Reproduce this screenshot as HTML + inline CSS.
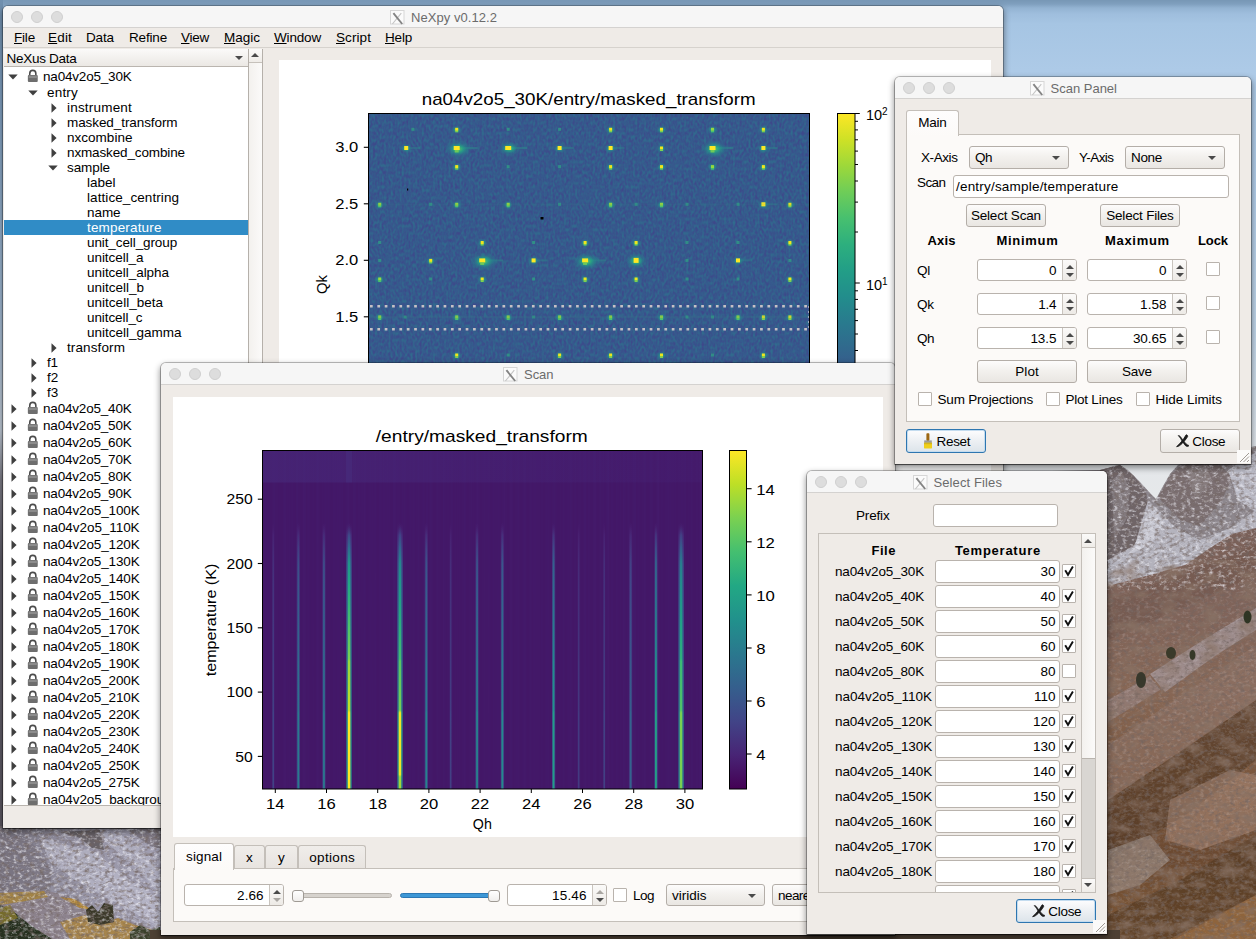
<!DOCTYPE html>
<html><head><meta charset="utf-8"><title>NeXpy</title>
<style>
html,body{margin:0;padding:0;}
body{width:1256px;height:939px;overflow:hidden;position:relative;font-family:"Liberation Sans",sans-serif;background:#6b5a52;}
.t{position:absolute;white-space:nowrap;color:#000;}
.win{position:absolute;background:#efebe7;border-radius:5px 5px 0 0;box-shadow:0 0 0 1px rgba(0,0,0,.24),0 1px 1px 0 rgba(0,0,0,.5),0 3px 6px 1px rgba(0,0,0,.42);overflow:hidden;}
.tb{position:absolute;left:0;top:0;right:0;height:21px;background:#f6f6f6;border-bottom:1px solid #d4d2d0;}
.tl{position:absolute;width:10px;height:10px;border-radius:50%;background:#dddddd;border:1px solid #cfcfcf;box-sizing:content-box;}
.xi{position:absolute;width:13px;height:13px;border:1px solid #c9c9c9;background:#f9f9f9;font-family:"Liberation Serif",serif;font-size:17px;line-height:14px;text-align:center;color:#8e8e8e;overflow:hidden;}
.btn{position:absolute;box-sizing:border-box;border:1px solid #b4aea8;border-radius:3px;background:linear-gradient(#fdfcfc,#f3f1ee 45%,#e9e6e2);}
.fld{position:absolute;box-sizing:border-box;border:1px solid #b9b3ad;border-radius:3px;background:#fff;}
.cb{position:absolute;box-sizing:border-box;width:14px;height:14px;border:1px solid #b9b3ad;background:#fff;border-radius:1px;}
.spb{position:absolute;right:0;top:0;bottom:0;width:13px;border-left:1px solid #c9c4be;background:linear-gradient(#fbfaf9,#edeae6);border-radius:0 2px 2px 0;}
.au{position:absolute;width:0;height:0;border-left:3.5px solid transparent;border-right:3.5px solid transparent;border-bottom:4px solid #4a4a4a;}
.ad{position:absolute;width:0;height:0;border-left:3.5px solid transparent;border-right:3.5px solid transparent;border-top:4px solid #4a4a4a;}
.ar{position:absolute;width:0;height:0;border-top:4px solid transparent;border-bottom:4px solid transparent;border-left:5px solid #3c3c3c;}
</style></head><body>

<div id="desk" style="position:absolute;left:0;top:0;width:1256px;height:939px;overflow:hidden;">
<div style="position:absolute;left:0;top:0;width:1256px;height:500px;background:linear-gradient(#7797b5 0px,#7f9fbe 4px,#93b3d2 8px,#9fbedd 14px,#a6c5e3 24px,#adcae7 70px,#b3cee9 200px,#c0d5e9 330px,#d4dfe9 410px,#e4e7ea 460px,#e6e8ea 500px);"></div>
<div style="position:absolute;left:0;top:0;width:3px;height:830px;background:linear-gradient(#6f8fae 0px,#7f9fc0 80px,#9fb8d2 300px,#c0cad6 430px,#7d7c86 480px,#5f5c68 560px,#625e69 700px,#5c5862 830px);"></div>
<svg style="position:absolute;left:0;top:0" width="1256" height="939" viewBox="0 0 1256 939">
<defs>
<filter id="nw" x="0" y="0" width="100%" height="100%"><feTurbulence type="fractalNoise" baseFrequency="0.22 0.32" numOctaves="3" seed="4"/><feColorMatrix values="0 0 0 0 0.88  0 0 0 0 0.88  0 0 0 0 0.94  2.6 0 0 0 -1.25"/></filter>
<filter id="nd" x="0" y="0" width="100%" height="100%"><feTurbulence type="fractalNoise" baseFrequency="0.2 0.3" numOctaves="3" seed="11"/><feColorMatrix values="0 0 0 0 0.17  0 0 0 0 0.13  0 0 0 0 0.12  0 2.8 0 0 -1.3"/></filter>
<filter id="nb" x="0" y="0" width="100%" height="100%"><feTurbulence type="fractalNoise" baseFrequency="0.05 0.09" numOctaves="2" seed="23"/><feColorMatrix values="0 0 0 0 0.25  0 0 0 0 0.17  0 0 0 0 0.13  0 0 2.4 0 -1.05"/></filter>
<linearGradient id="mr" x1="0" y1="0" x2="0" y2="1"><stop offset="0" stop-color="#7a6058"/><stop offset="0.2" stop-color="#80645a"/><stop offset="0.4" stop-color="#876755"/><stop offset="0.6" stop-color="#7b573d"/><stop offset="0.8" stop-color="#6b4930"/><stop offset="1" stop-color="#805a38"/></linearGradient>
<linearGradient id="ml" x1="0" y1="0" x2="1" y2="0.25"><stop offset="0" stop-color="#6d6873"/><stop offset="0.35" stop-color="#8f8c9c"/><stop offset="1" stop-color="#a3a1b4"/></linearGradient>
<clipPath id="cr"><rect x="1003" y="440" width="253" height="499"/></clipPath>
<clipPath id="cm"><path d="M1003 472 L1100 470 L1108 468 L1114 466 L1120 465 L1128 470 L1140 482 L1150 493 L1156 499 L1162 488 L1170 474 L1178 465 L1200 458 L1256 446 L1256 939 L1003 939 Z"/></clipPath>
<clipPath id="cl"><rect x="0" y="826" width="165" height="113"/></clipPath>
</defs>
<!-- right mountain -->
<g clip-path="url(#cr)">
<path d="M1003 472 L1100 470 L1108 468 L1114 466 L1120 465 L1128 470 L1140 482 L1150 493 L1156 499 L1162 488 L1170 474 L1178 465 L1200 458 L1256 446 L1256 939 L1003 939 Z" fill="#8d878d"/>
<path d="M1100 470 L1120 465 L1134 476 L1146 492 L1150 520 L1140 545 L1125 562 L1100 570 Z" fill="#6f6568"/>
<path d="M1112 480 L1122 472 L1130 490 L1126 520 L1114 540 Z" fill="#8a8286" opacity=".8"/>
<path d="M1158 497 L1170 476 L1180 466 L1215 458 L1232 478 L1222 500 L1200 526 L1180 520 Z" fill="#7b6f71"/>
<path d="M1185 470 L1205 464 L1212 480 L1196 500 Z" fill="#8d8386" opacity=".8"/>
<path d="M1148 500 L1158 510 L1176 528 L1200 540 L1230 528 L1256 510 L1256 545 L1200 565 L1150 578 L1108 590 L1108 560 L1135 545 Z" fill="#b4b3bd"/>
<path d="M1228 470 L1256 452 L1256 512 L1238 500 Z" fill="#bcbcc7"/>
<path d="M1150 505 L1165 522 L1150 545 L1128 555 L1140 535 Z" fill="#c9c9d3" opacity=".8"/>
<path d="M1100 588 L1150 575 L1185 565 L1210 548 L1232 534 L1256 528 L1256 939 L1100 939 Z" fill="url(#mr)"/>
<path d="M1108 600 L1180 575 L1256 545 L1256 575 L1200 600 L1108 640 Z" fill="#74594f" opacity=".7"/>
<path d="M1150 674 L1200 642 L1256 608 L1256 630 L1215 656 L1165 692 Z" fill="#a89da3" opacity=".7"/>
<path d="M1108 700 L1150 676 L1160 690 L1108 722 Z" fill="#9a8a8c" opacity=".55"/>
<path d="M1108 745 L1256 645 L1256 700 L1108 800 Z" fill="#8f746a" opacity=".55"/>
<path d="M1108 800 L1180 752 L1256 700 L1256 760 L1190 812 L1108 862 Z" fill="#4f3622" opacity=".6"/><path d="M1170 800 L1230 770 L1256 775 L1256 830 L1200 850 L1165 840 Z" fill="#b29182" opacity=".5"/>
<path d="M1108 850 L1150 835 L1170 860 L1140 885 L1108 895 Z" fill="#a9a09c" opacity=".55"/>
<path d="M1108 915 L1180 880 L1256 835 L1256 895 L1170 939 L1108 939 Z" fill="#553a22" opacity=".7"/>
<path d="M1175 939 L1256 895 L1256 939 Z" fill="#94683f" opacity=".8"/>
<g clip-path="url(#cm)"><rect x="1100" y="440" width="156" height="150" filter="url(#nw)" opacity=".75"/>
<rect x="1100" y="590" width="156" height="349" filter="url(#nw)" opacity=".2"/>
<rect x="1100" y="440" width="156" height="499" filter="url(#nd)" opacity=".7"/>
<rect x="1100" y="560" width="156" height="379" filter="url(#nb)" opacity=".8"/></g>
<ellipse cx="1247.5" cy="617" rx="4" ry="6.5" fill="#2f3524"/><ellipse cx="1192.5" cy="655" rx="3" ry="5" fill="#353828"/><ellipse cx="1171" cy="653" rx="5" ry="6" fill="#3a3a2a"/><ellipse cx="1141" cy="680" rx="5" ry="8" fill="#38382c"/>
</g>
<!-- bottom-left rock -->
<g clip-path="url(#cl)">
<rect x="0" y="820" width="170" height="119" fill="url(#ml)"/>
<path d="M0 836 L30 840 L52 870 L50 895 L20 905 L0 900 Z" fill="#7a7480" opacity=".75"/>
<path d="M60 832 L100 830 L104 850 L92 848 L80 838 Z" fill="#5b5558" opacity=".8"/>
<path d="M128 830 L165 828 L165 850 L150 846 Z" fill="#77717a" opacity=".8"/>
<path d="M40 838 L95 852 L130 880 L160 900 L165 930 L120 905 L75 880 L50 862 Z" fill="#c3c3d4" opacity=".55"/>
<path d="M95 832 L120 834 L150 856 L165 880 L165 900 L140 872 Z" fill="#b9b9cb" opacity=".55"/>
<path d="M0 892 L45 890 L70 897 L95 912 L125 920 L165 932 L165 939 L0 939 Z" fill="#8b8088" opacity=".8"/>
<path d="M0 893 L44 891 L48 897 L20 902 L0 905 Z" fill="#a98536" opacity=".8"/>
<path d="M60 897 L75 899 L92 910 L80 908 Z" fill="#b9882c" opacity=".85"/>
<path d="M0 905 L14 912 L30 925 L52 939 L0 939 Z" fill="#26301f"/>
<path d="M0 908 L10 905 L18 918 L0 925 Z" fill="#8a7a2c" opacity=".8"/>
<path d="M60 922 L85 915 L100 925 L118 918 L135 925 L160 932 L160 939 L70 939 Z" fill="#b0852f" opacity=".7"/>
<path d="M86 910 L92 905 L98 912 L104 903 L113 905 L114 922 L100 925 L88 922 Z" fill="#3a3828"/>
<path d="M130 932 L140 925 L150 930 L160 927 L160 939 L130 939 Z" fill="#39402a"/>
<rect x="0" y="820" width="170" height="119" filter="url(#nw)" opacity=".75"/>
<rect x="0" y="820" width="170" height="119" filter="url(#nd)" opacity=".75"/>
</g>
<rect x="150" y="930" width="970" height="9" fill="#4d4034"/>
</svg></div>

<div class="win" style="left:3px;top:6px;width:1000px;height:822px;">
<div class="tb"></div>
<div class="tl" style="left:8px;top:4.5px"></div>
<div class="tl" style="left:28px;top:4.5px"></div>
<div class="tl" style="left:48px;top:4.5px"></div>
<svg style="position:absolute;left:386.5px;top:4px" width="15" height="15" viewBox="0 0 15 15"><rect x="0.5" y="0.5" width="13.5" height="13.5" fill="#fbfbfb" stroke="#d6d6d6" stroke-width="1"/><path d="M11.3 3.2 L2.4 14" stroke="#c4c4c4" stroke-width="1.1" fill="none"/><path d="M3.4 3.2 L12.2 14" stroke="#848484" stroke-width="1.9" fill="none"/></svg>
</div>
<div id="mainwin" style="position:absolute;left:0;top:0;width:1003px;height:828px;overflow:hidden;">
<div class="t" style="left:411.0px;top:9.5px;font-size:13px;line-height:16px;color:#6b6b6b;letter-spacing:0.06px;">NeXpy v0.12.2</div>
<div style="position:absolute;left:3px;top:28px;width:1000px;height:19px;background:#efebe7;border-bottom:1px solid #d6d2cd;"></div>
<div class="t" style="left:14.0px;top:30.0px;font-size:13.5px;line-height:16px;letter-spacing:-0.19px;"><u>F</u>ile</div>
<div class="t" style="left:48.0px;top:30.0px;font-size:13.5px;line-height:16px;letter-spacing:0.18px;"><u>E</u>dit</div>
<div class="t" style="left:86.0px;top:30.0px;font-size:13.5px;line-height:16px;letter-spacing:-0.13px;">Data</div>
<div class="t" style="left:129.0px;top:30.0px;font-size:13.5px;line-height:16px;letter-spacing:-0.17px;">Refine</div>
<div class="t" style="left:181.0px;top:30.0px;font-size:13.5px;line-height:16px;letter-spacing:-0.25px;"><u>V</u>iew</div>
<div class="t" style="left:224.0px;top:30.0px;font-size:13.5px;line-height:16px;"><u>M</u>agic</div>
<div class="t" style="left:274.0px;top:30.0px;font-size:13.5px;line-height:16px;letter-spacing:-0.17px;"><u>W</u>indow</div>
<div class="t" style="left:336.0px;top:30.0px;font-size:13.5px;line-height:16px;letter-spacing:0.08px;"><u>S</u>cript</div>
<div class="t" style="left:385.0px;top:30.0px;font-size:13.5px;line-height:16px;letter-spacing:-0.19px;"><u>H</u>elp</div>
<div style="position:absolute;left:4px;top:49px;width:244px;height:18px;background:linear-gradient(#fbfaf9,#ebe8e4);border-bottom:1px solid #bab5af;box-sizing:border-box;"></div>
<div class="t" style="left:6.5px;top:50.5px;font-size:13.5px;line-height:16px;letter-spacing:-0.28px;">NeXus Data</div>
<div class="ad" style="left:235px;top:56px;border-left-width:4px;border-right-width:4px;border-top-width:4px"></div>
<div style="position:absolute;left:4px;top:67px;width:244px;height:738px;background:#fff;"></div>
<div style="position:absolute;left:248px;top:49px;width:1px;height:757px;background:#b5b0aa;"></div>
<div style="position:absolute;left:4px;top:805px;width:245px;height:1px;background:#b9b4ae;"></div>
<div style="position:absolute;left:249px;top:49px;width:13px;height:756px;background:linear-gradient(90deg,#f3f1ee,#fbfaf9);border-right:1px solid #b5b0aa;"></div>
<div style="position:absolute;left:249px;top:49px;width:13px;height:13px;background:linear-gradient(#fbfaf9,#efece8);border-bottom:1px solid #c6c1bb;"></div>
<div class="au" style="left:251px;top:53px;border-left-width:4.5px;border-right-width:4.5px;border-bottom-width:4.5px"></div>
<div style="position:absolute;left:4px;top:67px;width:244px;height:738px;overflow:hidden;"><div style="position:absolute;left:-4px;top:-67px;">
<svg style="position:absolute;left:8px;top:73.5px" width="10" height="6" viewBox="0 0 10 6"><path d="M0.3 0.5 L9.7 0.5 L5 5.6 Z" fill="#3f3f3f"/></svg>
<svg style="position:absolute;left:26.5px;top:69.2px" width="11.6" height="13.7" viewBox="0 0 11 13"><path d="M2.6 6 V4.2 a2.9 2.9 0 0 1 5.8 0 V6" fill="none" stroke="#4b4b4b" stroke-width="1.5"/><rect x="0.8" y="5.6" width="9.4" height="6.8" rx="1" fill="#6e6e6e"/><rect x="1.6" y="6.4" width="7.8" height="2.2" fill="#8c8c8c"/></svg>
<div class="t" style="left:43.0px;top:68.8px;font-size:13.5px;line-height:16px;letter-spacing:-0.19px;">na04v2o5_30K</div>
<svg style="position:absolute;left:28px;top:89.5px" width="10" height="6" viewBox="0 0 10 6"><path d="M0.3 0.5 L9.7 0.5 L5 5.6 Z" fill="#3f3f3f"/></svg>
<div class="t" style="left:47.0px;top:84.8px;font-size:13.5px;line-height:16px;letter-spacing:0.20px;">entry</div>
<svg style="position:absolute;left:50.5px;top:102.5px" width="6" height="10" viewBox="0 0 6 10"><path d="M0.5 0.3 L0.5 9.7 L5.6 5 Z" fill="#3f3f3f"/></svg>
<div class="t" style="left:67.0px;top:99.8px;font-size:13.5px;line-height:16px;letter-spacing:0.20px;">instrument</div>
<svg style="position:absolute;left:50.5px;top:117.5px" width="6" height="10" viewBox="0 0 6 10"><path d="M0.5 0.3 L0.5 9.7 L5.6 5 Z" fill="#3f3f3f"/></svg>
<div class="t" style="left:67.0px;top:114.8px;font-size:13.5px;line-height:16px;letter-spacing:-0.08px;">masked_transform</div>
<svg style="position:absolute;left:50.5px;top:132.5px" width="6" height="10" viewBox="0 0 6 10"><path d="M0.5 0.3 L0.5 9.7 L5.6 5 Z" fill="#3f3f3f"/></svg>
<div class="t" style="left:67.0px;top:129.8px;font-size:13.5px;line-height:16px;letter-spacing:0.02px;">nxcombine</div>
<svg style="position:absolute;left:50.5px;top:147.5px" width="6" height="10" viewBox="0 0 6 10"><path d="M0.5 0.3 L0.5 9.7 L5.6 5 Z" fill="#3f3f3f"/></svg>
<div class="t" style="left:67.0px;top:144.8px;font-size:13.5px;line-height:16px;letter-spacing:-0.13px;">nxmasked_combine</div>
<svg style="position:absolute;left:48px;top:164.5px" width="10" height="6" viewBox="0 0 10 6"><path d="M0.3 0.5 L9.7 0.5 L5 5.6 Z" fill="#3f3f3f"/></svg>
<div class="t" style="left:67.0px;top:159.8px;font-size:13.5px;line-height:16px;letter-spacing:-0.09px;">sample</div>
<div class="t" style="left:87.0px;top:174.8px;font-size:13.5px;line-height:16px;">label</div>
<div class="t" style="left:87.0px;top:189.8px;font-size:13.5px;line-height:16px;letter-spacing:0.08px;">lattice_centring</div>
<div class="t" style="left:87.0px;top:204.8px;font-size:13.5px;line-height:16px;letter-spacing:-0.07px;">name</div>
<div style="position:absolute;left:4px;top:220px;width:244px;height:15px;background:#308cc6;"></div>
<div class="t" style="left:87.0px;top:219.8px;font-size:13.5px;line-height:16px;color:#fff;letter-spacing:0.16px;">temperature</div>
<div class="t" style="left:87.0px;top:234.8px;font-size:13.5px;line-height:16px;letter-spacing:-0.10px;">unit_cell_group</div>
<div class="t" style="left:87.0px;top:249.8px;font-size:13.5px;line-height:16px;letter-spacing:-0.05px;">unitcell_a</div>
<div class="t" style="left:87.0px;top:264.8px;font-size:13.5px;line-height:16px;letter-spacing:-0.04px;">unitcell_alpha</div>
<div class="t" style="left:87.0px;top:279.8px;font-size:13.5px;line-height:16px;">unitcell_b</div>
<div class="t" style="left:87.0px;top:294.8px;font-size:13.5px;line-height:16px;letter-spacing:0.02px;">unitcell_beta</div>
<div class="t" style="left:87.0px;top:309.8px;font-size:13.5px;line-height:16px;letter-spacing:-0.08px;">unitcell_c</div>
<div class="t" style="left:87.0px;top:324.8px;font-size:13.5px;line-height:16px;">unitcell_gamma</div>
<svg style="position:absolute;left:50.5px;top:342.5px" width="6" height="10" viewBox="0 0 6 10"><path d="M0.5 0.3 L0.5 9.7 L5.6 5 Z" fill="#3f3f3f"/></svg>
<div class="t" style="left:67.0px;top:339.8px;font-size:13.5px;line-height:16px;letter-spacing:0.11px;">transform</div>
<svg style="position:absolute;left:30.5px;top:357.5px" width="6" height="10" viewBox="0 0 6 10"><path d="M0.5 0.3 L0.5 9.7 L5.6 5 Z" fill="#3f3f3f"/></svg>
<div class="t" style="left:47.0px;top:354.8px;font-size:13.5px;line-height:16px;letter-spacing:-0.13px;">f1</div>
<svg style="position:absolute;left:30.5px;top:372.5px" width="6" height="10" viewBox="0 0 6 10"><path d="M0.5 0.3 L0.5 9.7 L5.6 5 Z" fill="#3f3f3f"/></svg>
<div class="t" style="left:47.0px;top:369.8px;font-size:13.5px;line-height:16px;letter-spacing:0.12px;">f2</div>
<svg style="position:absolute;left:30.5px;top:387.5px" width="6" height="10" viewBox="0 0 6 10"><path d="M0.5 0.3 L0.5 9.7 L5.6 5 Z" fill="#3f3f3f"/></svg>
<div class="t" style="left:47.0px;top:384.8px;font-size:13.5px;line-height:16px;letter-spacing:0.12px;">f3</div>
<svg style="position:absolute;left:10.5px;top:403.5px" width="6" height="10" viewBox="0 0 6 10"><path d="M0.5 0.3 L0.5 9.7 L5.6 5 Z" fill="#3f3f3f"/></svg>
<svg style="position:absolute;left:26.5px;top:401.2px" width="11.6" height="13.7" viewBox="0 0 11 13"><path d="M2.6 6 V4.2 a2.9 2.9 0 0 1 5.8 0 V6" fill="none" stroke="#4b4b4b" stroke-width="1.5"/><rect x="0.8" y="5.6" width="9.4" height="6.8" rx="1" fill="#6e6e6e"/><rect x="1.6" y="6.4" width="7.8" height="2.2" fill="#8c8c8c"/></svg>
<div class="t" style="left:43.0px;top:400.8px;font-size:13.5px;line-height:16px;letter-spacing:-0.19px;">na04v2o5_40K</div>
<svg style="position:absolute;left:10.5px;top:420.5px" width="6" height="10" viewBox="0 0 6 10"><path d="M0.5 0.3 L0.5 9.7 L5.6 5 Z" fill="#3f3f3f"/></svg>
<svg style="position:absolute;left:26.5px;top:418.2px" width="11.6" height="13.7" viewBox="0 0 11 13"><path d="M2.6 6 V4.2 a2.9 2.9 0 0 1 5.8 0 V6" fill="none" stroke="#4b4b4b" stroke-width="1.5"/><rect x="0.8" y="5.6" width="9.4" height="6.8" rx="1" fill="#6e6e6e"/><rect x="1.6" y="6.4" width="7.8" height="2.2" fill="#8c8c8c"/></svg>
<div class="t" style="left:43.0px;top:417.8px;font-size:13.5px;line-height:16px;letter-spacing:-0.19px;">na04v2o5_50K</div>
<svg style="position:absolute;left:10.5px;top:437.5px" width="6" height="10" viewBox="0 0 6 10"><path d="M0.5 0.3 L0.5 9.7 L5.6 5 Z" fill="#3f3f3f"/></svg>
<svg style="position:absolute;left:26.5px;top:435.2px" width="11.6" height="13.7" viewBox="0 0 11 13"><path d="M2.6 6 V4.2 a2.9 2.9 0 0 1 5.8 0 V6" fill="none" stroke="#4b4b4b" stroke-width="1.5"/><rect x="0.8" y="5.6" width="9.4" height="6.8" rx="1" fill="#6e6e6e"/><rect x="1.6" y="6.4" width="7.8" height="2.2" fill="#8c8c8c"/></svg>
<div class="t" style="left:43.0px;top:434.8px;font-size:13.5px;line-height:16px;letter-spacing:-0.19px;">na04v2o5_60K</div>
<svg style="position:absolute;left:10.5px;top:454.5px" width="6" height="10" viewBox="0 0 6 10"><path d="M0.5 0.3 L0.5 9.7 L5.6 5 Z" fill="#3f3f3f"/></svg>
<svg style="position:absolute;left:26.5px;top:452.2px" width="11.6" height="13.7" viewBox="0 0 11 13"><path d="M2.6 6 V4.2 a2.9 2.9 0 0 1 5.8 0 V6" fill="none" stroke="#4b4b4b" stroke-width="1.5"/><rect x="0.8" y="5.6" width="9.4" height="6.8" rx="1" fill="#6e6e6e"/><rect x="1.6" y="6.4" width="7.8" height="2.2" fill="#8c8c8c"/></svg>
<div class="t" style="left:43.0px;top:451.8px;font-size:13.5px;line-height:16px;letter-spacing:-0.19px;">na04v2o5_70K</div>
<svg style="position:absolute;left:10.5px;top:471.5px" width="6" height="10" viewBox="0 0 6 10"><path d="M0.5 0.3 L0.5 9.7 L5.6 5 Z" fill="#3f3f3f"/></svg>
<svg style="position:absolute;left:26.5px;top:469.2px" width="11.6" height="13.7" viewBox="0 0 11 13"><path d="M2.6 6 V4.2 a2.9 2.9 0 0 1 5.8 0 V6" fill="none" stroke="#4b4b4b" stroke-width="1.5"/><rect x="0.8" y="5.6" width="9.4" height="6.8" rx="1" fill="#6e6e6e"/><rect x="1.6" y="6.4" width="7.8" height="2.2" fill="#8c8c8c"/></svg>
<div class="t" style="left:43.0px;top:468.8px;font-size:13.5px;line-height:16px;letter-spacing:-0.19px;">na04v2o5_80K</div>
<svg style="position:absolute;left:10.5px;top:488.5px" width="6" height="10" viewBox="0 0 6 10"><path d="M0.5 0.3 L0.5 9.7 L5.6 5 Z" fill="#3f3f3f"/></svg>
<svg style="position:absolute;left:26.5px;top:486.2px" width="11.6" height="13.7" viewBox="0 0 11 13"><path d="M2.6 6 V4.2 a2.9 2.9 0 0 1 5.8 0 V6" fill="none" stroke="#4b4b4b" stroke-width="1.5"/><rect x="0.8" y="5.6" width="9.4" height="6.8" rx="1" fill="#6e6e6e"/><rect x="1.6" y="6.4" width="7.8" height="2.2" fill="#8c8c8c"/></svg>
<div class="t" style="left:43.0px;top:485.8px;font-size:13.5px;line-height:16px;letter-spacing:-0.19px;">na04v2o5_90K</div>
<svg style="position:absolute;left:10.5px;top:505.5px" width="6" height="10" viewBox="0 0 6 10"><path d="M0.5 0.3 L0.5 9.7 L5.6 5 Z" fill="#3f3f3f"/></svg>
<svg style="position:absolute;left:26.5px;top:503.2px" width="11.6" height="13.7" viewBox="0 0 11 13"><path d="M2.6 6 V4.2 a2.9 2.9 0 0 1 5.8 0 V6" fill="none" stroke="#4b4b4b" stroke-width="1.5"/><rect x="0.8" y="5.6" width="9.4" height="6.8" rx="1" fill="#6e6e6e"/><rect x="1.6" y="6.4" width="7.8" height="2.2" fill="#8c8c8c"/></svg>
<div class="t" style="left:43.0px;top:502.8px;font-size:13.5px;line-height:16px;letter-spacing:-0.14px;">na04v2o5_100K</div>
<svg style="position:absolute;left:10.5px;top:522.5px" width="6" height="10" viewBox="0 0 6 10"><path d="M0.5 0.3 L0.5 9.7 L5.6 5 Z" fill="#3f3f3f"/></svg>
<svg style="position:absolute;left:26.5px;top:520.2px" width="11.6" height="13.7" viewBox="0 0 11 13"><path d="M2.6 6 V4.2 a2.9 2.9 0 0 1 5.8 0 V6" fill="none" stroke="#4b4b4b" stroke-width="1.5"/><rect x="0.8" y="5.6" width="9.4" height="6.8" rx="1" fill="#6e6e6e"/><rect x="1.6" y="6.4" width="7.8" height="2.2" fill="#8c8c8c"/></svg>
<div class="t" style="left:43.0px;top:519.8px;font-size:13.5px;line-height:16px;letter-spacing:-0.06px;">na04v2o5_110K</div>
<svg style="position:absolute;left:10.5px;top:539.5px" width="6" height="10" viewBox="0 0 6 10"><path d="M0.5 0.3 L0.5 9.7 L5.6 5 Z" fill="#3f3f3f"/></svg>
<svg style="position:absolute;left:26.5px;top:537.2px" width="11.6" height="13.7" viewBox="0 0 11 13"><path d="M2.6 6 V4.2 a2.9 2.9 0 0 1 5.8 0 V6" fill="none" stroke="#4b4b4b" stroke-width="1.5"/><rect x="0.8" y="5.6" width="9.4" height="6.8" rx="1" fill="#6e6e6e"/><rect x="1.6" y="6.4" width="7.8" height="2.2" fill="#8c8c8c"/></svg>
<div class="t" style="left:43.0px;top:536.8px;font-size:13.5px;line-height:16px;letter-spacing:-0.14px;">na04v2o5_120K</div>
<svg style="position:absolute;left:10.5px;top:556.5px" width="6" height="10" viewBox="0 0 6 10"><path d="M0.5 0.3 L0.5 9.7 L5.6 5 Z" fill="#3f3f3f"/></svg>
<svg style="position:absolute;left:26.5px;top:554.2px" width="11.6" height="13.7" viewBox="0 0 11 13"><path d="M2.6 6 V4.2 a2.9 2.9 0 0 1 5.8 0 V6" fill="none" stroke="#4b4b4b" stroke-width="1.5"/><rect x="0.8" y="5.6" width="9.4" height="6.8" rx="1" fill="#6e6e6e"/><rect x="1.6" y="6.4" width="7.8" height="2.2" fill="#8c8c8c"/></svg>
<div class="t" style="left:43.0px;top:553.8px;font-size:13.5px;line-height:16px;letter-spacing:-0.14px;">na04v2o5_130K</div>
<svg style="position:absolute;left:10.5px;top:573.5px" width="6" height="10" viewBox="0 0 6 10"><path d="M0.5 0.3 L0.5 9.7 L5.6 5 Z" fill="#3f3f3f"/></svg>
<svg style="position:absolute;left:26.5px;top:571.2px" width="11.6" height="13.7" viewBox="0 0 11 13"><path d="M2.6 6 V4.2 a2.9 2.9 0 0 1 5.8 0 V6" fill="none" stroke="#4b4b4b" stroke-width="1.5"/><rect x="0.8" y="5.6" width="9.4" height="6.8" rx="1" fill="#6e6e6e"/><rect x="1.6" y="6.4" width="7.8" height="2.2" fill="#8c8c8c"/></svg>
<div class="t" style="left:43.0px;top:570.8px;font-size:13.5px;line-height:16px;letter-spacing:-0.14px;">na04v2o5_140K</div>
<svg style="position:absolute;left:10.5px;top:590.5px" width="6" height="10" viewBox="0 0 6 10"><path d="M0.5 0.3 L0.5 9.7 L5.6 5 Z" fill="#3f3f3f"/></svg>
<svg style="position:absolute;left:26.5px;top:588.2px" width="11.6" height="13.7" viewBox="0 0 11 13"><path d="M2.6 6 V4.2 a2.9 2.9 0 0 1 5.8 0 V6" fill="none" stroke="#4b4b4b" stroke-width="1.5"/><rect x="0.8" y="5.6" width="9.4" height="6.8" rx="1" fill="#6e6e6e"/><rect x="1.6" y="6.4" width="7.8" height="2.2" fill="#8c8c8c"/></svg>
<div class="t" style="left:43.0px;top:587.8px;font-size:13.5px;line-height:16px;letter-spacing:-0.14px;">na04v2o5_150K</div>
<svg style="position:absolute;left:10.5px;top:607.5px" width="6" height="10" viewBox="0 0 6 10"><path d="M0.5 0.3 L0.5 9.7 L5.6 5 Z" fill="#3f3f3f"/></svg>
<svg style="position:absolute;left:26.5px;top:605.2px" width="11.6" height="13.7" viewBox="0 0 11 13"><path d="M2.6 6 V4.2 a2.9 2.9 0 0 1 5.8 0 V6" fill="none" stroke="#4b4b4b" stroke-width="1.5"/><rect x="0.8" y="5.6" width="9.4" height="6.8" rx="1" fill="#6e6e6e"/><rect x="1.6" y="6.4" width="7.8" height="2.2" fill="#8c8c8c"/></svg>
<div class="t" style="left:43.0px;top:604.8px;font-size:13.5px;line-height:16px;letter-spacing:-0.14px;">na04v2o5_160K</div>
<svg style="position:absolute;left:10.5px;top:624.5px" width="6" height="10" viewBox="0 0 6 10"><path d="M0.5 0.3 L0.5 9.7 L5.6 5 Z" fill="#3f3f3f"/></svg>
<svg style="position:absolute;left:26.5px;top:622.2px" width="11.6" height="13.7" viewBox="0 0 11 13"><path d="M2.6 6 V4.2 a2.9 2.9 0 0 1 5.8 0 V6" fill="none" stroke="#4b4b4b" stroke-width="1.5"/><rect x="0.8" y="5.6" width="9.4" height="6.8" rx="1" fill="#6e6e6e"/><rect x="1.6" y="6.4" width="7.8" height="2.2" fill="#8c8c8c"/></svg>
<div class="t" style="left:43.0px;top:621.8px;font-size:13.5px;line-height:16px;letter-spacing:-0.14px;">na04v2o5_170K</div>
<svg style="position:absolute;left:10.5px;top:641.5px" width="6" height="10" viewBox="0 0 6 10"><path d="M0.5 0.3 L0.5 9.7 L5.6 5 Z" fill="#3f3f3f"/></svg>
<svg style="position:absolute;left:26.5px;top:639.2px" width="11.6" height="13.7" viewBox="0 0 11 13"><path d="M2.6 6 V4.2 a2.9 2.9 0 0 1 5.8 0 V6" fill="none" stroke="#4b4b4b" stroke-width="1.5"/><rect x="0.8" y="5.6" width="9.4" height="6.8" rx="1" fill="#6e6e6e"/><rect x="1.6" y="6.4" width="7.8" height="2.2" fill="#8c8c8c"/></svg>
<div class="t" style="left:43.0px;top:638.8px;font-size:13.5px;line-height:16px;letter-spacing:-0.14px;">na04v2o5_180K</div>
<svg style="position:absolute;left:10.5px;top:658.5px" width="6" height="10" viewBox="0 0 6 10"><path d="M0.5 0.3 L0.5 9.7 L5.6 5 Z" fill="#3f3f3f"/></svg>
<svg style="position:absolute;left:26.5px;top:656.2px" width="11.6" height="13.7" viewBox="0 0 11 13"><path d="M2.6 6 V4.2 a2.9 2.9 0 0 1 5.8 0 V6" fill="none" stroke="#4b4b4b" stroke-width="1.5"/><rect x="0.8" y="5.6" width="9.4" height="6.8" rx="1" fill="#6e6e6e"/><rect x="1.6" y="6.4" width="7.8" height="2.2" fill="#8c8c8c"/></svg>
<div class="t" style="left:43.0px;top:655.8px;font-size:13.5px;line-height:16px;letter-spacing:-0.14px;">na04v2o5_190K</div>
<svg style="position:absolute;left:10.5px;top:675.5px" width="6" height="10" viewBox="0 0 6 10"><path d="M0.5 0.3 L0.5 9.7 L5.6 5 Z" fill="#3f3f3f"/></svg>
<svg style="position:absolute;left:26.5px;top:673.2px" width="11.6" height="13.7" viewBox="0 0 11 13"><path d="M2.6 6 V4.2 a2.9 2.9 0 0 1 5.8 0 V6" fill="none" stroke="#4b4b4b" stroke-width="1.5"/><rect x="0.8" y="5.6" width="9.4" height="6.8" rx="1" fill="#6e6e6e"/><rect x="1.6" y="6.4" width="7.8" height="2.2" fill="#8c8c8c"/></svg>
<div class="t" style="left:43.0px;top:672.8px;font-size:13.5px;line-height:16px;letter-spacing:-0.14px;">na04v2o5_200K</div>
<svg style="position:absolute;left:10.5px;top:692.5px" width="6" height="10" viewBox="0 0 6 10"><path d="M0.5 0.3 L0.5 9.7 L5.6 5 Z" fill="#3f3f3f"/></svg>
<svg style="position:absolute;left:26.5px;top:690.2px" width="11.6" height="13.7" viewBox="0 0 11 13"><path d="M2.6 6 V4.2 a2.9 2.9 0 0 1 5.8 0 V6" fill="none" stroke="#4b4b4b" stroke-width="1.5"/><rect x="0.8" y="5.6" width="9.4" height="6.8" rx="1" fill="#6e6e6e"/><rect x="1.6" y="6.4" width="7.8" height="2.2" fill="#8c8c8c"/></svg>
<div class="t" style="left:43.0px;top:689.8px;font-size:13.5px;line-height:16px;letter-spacing:-0.14px;">na04v2o5_210K</div>
<svg style="position:absolute;left:10.5px;top:709.5px" width="6" height="10" viewBox="0 0 6 10"><path d="M0.5 0.3 L0.5 9.7 L5.6 5 Z" fill="#3f3f3f"/></svg>
<svg style="position:absolute;left:26.5px;top:707.2px" width="11.6" height="13.7" viewBox="0 0 11 13"><path d="M2.6 6 V4.2 a2.9 2.9 0 0 1 5.8 0 V6" fill="none" stroke="#4b4b4b" stroke-width="1.5"/><rect x="0.8" y="5.6" width="9.4" height="6.8" rx="1" fill="#6e6e6e"/><rect x="1.6" y="6.4" width="7.8" height="2.2" fill="#8c8c8c"/></svg>
<div class="t" style="left:43.0px;top:706.8px;font-size:13.5px;line-height:16px;letter-spacing:-0.14px;">na04v2o5_220K</div>
<svg style="position:absolute;left:10.5px;top:726.5px" width="6" height="10" viewBox="0 0 6 10"><path d="M0.5 0.3 L0.5 9.7 L5.6 5 Z" fill="#3f3f3f"/></svg>
<svg style="position:absolute;left:26.5px;top:724.2px" width="11.6" height="13.7" viewBox="0 0 11 13"><path d="M2.6 6 V4.2 a2.9 2.9 0 0 1 5.8 0 V6" fill="none" stroke="#4b4b4b" stroke-width="1.5"/><rect x="0.8" y="5.6" width="9.4" height="6.8" rx="1" fill="#6e6e6e"/><rect x="1.6" y="6.4" width="7.8" height="2.2" fill="#8c8c8c"/></svg>
<div class="t" style="left:43.0px;top:723.8px;font-size:13.5px;line-height:16px;letter-spacing:-0.14px;">na04v2o5_230K</div>
<svg style="position:absolute;left:10.5px;top:743.5px" width="6" height="10" viewBox="0 0 6 10"><path d="M0.5 0.3 L0.5 9.7 L5.6 5 Z" fill="#3f3f3f"/></svg>
<svg style="position:absolute;left:26.5px;top:741.2px" width="11.6" height="13.7" viewBox="0 0 11 13"><path d="M2.6 6 V4.2 a2.9 2.9 0 0 1 5.8 0 V6" fill="none" stroke="#4b4b4b" stroke-width="1.5"/><rect x="0.8" y="5.6" width="9.4" height="6.8" rx="1" fill="#6e6e6e"/><rect x="1.6" y="6.4" width="7.8" height="2.2" fill="#8c8c8c"/></svg>
<div class="t" style="left:43.0px;top:740.8px;font-size:13.5px;line-height:16px;letter-spacing:-0.14px;">na04v2o5_240K</div>
<svg style="position:absolute;left:10.5px;top:760.5px" width="6" height="10" viewBox="0 0 6 10"><path d="M0.5 0.3 L0.5 9.7 L5.6 5 Z" fill="#3f3f3f"/></svg>
<svg style="position:absolute;left:26.5px;top:758.2px" width="11.6" height="13.7" viewBox="0 0 11 13"><path d="M2.6 6 V4.2 a2.9 2.9 0 0 1 5.8 0 V6" fill="none" stroke="#4b4b4b" stroke-width="1.5"/><rect x="0.8" y="5.6" width="9.4" height="6.8" rx="1" fill="#6e6e6e"/><rect x="1.6" y="6.4" width="7.8" height="2.2" fill="#8c8c8c"/></svg>
<div class="t" style="left:43.0px;top:757.8px;font-size:13.5px;line-height:16px;letter-spacing:-0.14px;">na04v2o5_250K</div>
<svg style="position:absolute;left:10.5px;top:777.5px" width="6" height="10" viewBox="0 0 6 10"><path d="M0.5 0.3 L0.5 9.7 L5.6 5 Z" fill="#3f3f3f"/></svg>
<svg style="position:absolute;left:26.5px;top:775.2px" width="11.6" height="13.7" viewBox="0 0 11 13"><path d="M2.6 6 V4.2 a2.9 2.9 0 0 1 5.8 0 V6" fill="none" stroke="#4b4b4b" stroke-width="1.5"/><rect x="0.8" y="5.6" width="9.4" height="6.8" rx="1" fill="#6e6e6e"/><rect x="1.6" y="6.4" width="7.8" height="2.2" fill="#8c8c8c"/></svg>
<div class="t" style="left:43.0px;top:774.8px;font-size:13.5px;line-height:16px;letter-spacing:-0.14px;">na04v2o5_275K</div>
<svg style="position:absolute;left:10.5px;top:794.5px" width="6" height="10" viewBox="0 0 6 10"><path d="M0.5 0.3 L0.5 9.7 L5.6 5 Z" fill="#3f3f3f"/></svg>
<svg style="position:absolute;left:26.5px;top:792.2px" width="11.6" height="13.7" viewBox="0 0 11 13"><path d="M2.6 6 V4.2 a2.9 2.9 0 0 1 5.8 0 V6" fill="none" stroke="#4b4b4b" stroke-width="1.5"/><rect x="0.8" y="5.6" width="9.4" height="6.8" rx="1" fill="#6e6e6e"/><rect x="1.6" y="6.4" width="7.8" height="2.2" fill="#8c8c8c"/></svg>
<div class="t" style="left:43.0px;top:791.8px;font-size:13.5px;line-height:16px;letter-spacing:-0.07px;">na04v2o5_background</div>
</div></div>
<div style="position:absolute;left:279px;top:60px;width:712px;height:760px;background:#fff;"></div>
</div>
<svg style="position:absolute;left:279px;top:60px" width="712" height="310" viewBox="279 60 712 310">
<defs><filter id="nz" x="0" y="0" width="100%" height="100%" color-interpolation-filters="sRGB"><feTurbulence type="fractalNoise" baseFrequency="0.45 0.28" numOctaves="1" seed="3"/><feColorMatrix values="0 0 0 0 0.25  0 0 0 0 0.27  0 0 0 0 0.54  2.6 0 0 0 -0.95"/></filter><filter id="nz2" x="0" y="0" width="100%" height="100%" color-interpolation-filters="sRGB"><feTurbulence type="fractalNoise" baseFrequency="0.45 0.28" numOctaves="1" seed="19"/><feColorMatrix values="0 0 0 0 0.18  0 0 0 0 0.46  0 0 0 0 0.56  0 2.6 0 0 -1.05"/></filter><radialGradient id="hl"><stop offset="0" stop-color="#5ec962" stop-opacity="1"/><stop offset="0.35" stop-color="#25a584" stop-opacity=".85"/><stop offset="0.7" stop-color="#26828e" stop-opacity=".4"/><stop offset="1" stop-color="#26828e" stop-opacity="0"/></radialGradient><linearGradient id="cb1" x1="0" y1="0" x2="0" y2="1">
<stop offset="0.00" stop-color="#fde725"/>
<stop offset="0.10" stop-color="#cee126"/>
<stop offset="0.20" stop-color="#9dd83a"/>
<stop offset="0.30" stop-color="#6ecd58"/>
<stop offset="0.40" stop-color="#47c06f"/>
<stop offset="0.50" stop-color="#2daf7e"/>
<stop offset="0.60" stop-color="#229e87"/>
<stop offset="0.70" stop-color="#228d8c"/>
<stop offset="0.80" stop-color="#297a8e"/>
<stop offset="0.90" stop-color="#31688d"/>
<stop offset="1.00" stop-color="#3a558b"/>
</linearGradient></defs>
<rect x="368.5" y="113.5" width="441" height="260" fill="#36598d"/>
<rect x="368.5" y="113.5" width="441" height="260" filter="url(#nz)" opacity=".8"/>
<rect x="368.5" y="113.5" width="441" height="260" filter="url(#nz2)" opacity=".7"/>
<ellipse cx="456.7" cy="129.8" rx="5.5" ry="4.5" fill="url(#hl)" opacity=".85"/>
<rect x="455.2" y="127.8" width="3" height="3" fill="#f1e51d"/>
<rect x="455.2" y="130.8" width="3" height="1.5" fill="#7ad151"/>
<rect x="558.1" y="127.8" width="3" height="3" fill="#2fa084" opacity=".75"/>
<ellipse cx="610.6" cy="129.8" rx="5.5" ry="4.5" fill="url(#hl)" opacity=".85"/>
<rect x="609.1" y="127.8" width="3" height="3" fill="#f1e51d"/>
<rect x="609.1" y="130.8" width="3" height="1.5" fill="#7ad151"/>
<ellipse cx="661.5" cy="129.8" rx="5.5" ry="4.5" fill="url(#hl)" opacity=".85"/>
<rect x="660.0" y="127.8" width="3" height="3" fill="#f1e51d"/>
<rect x="660.0" y="130.8" width="3" height="1.5" fill="#7ad151"/>
<ellipse cx="712.5" cy="129.8" rx="5.5" ry="4.5" fill="url(#hl)" opacity=".85"/>
<rect x="711.0" y="127.8" width="3" height="3" fill="#95d840"/>
<rect x="711.0" y="130.8" width="3" height="1.5" fill="#4ac16d"/>
<ellipse cx="763.4" cy="129.8" rx="5.5" ry="4.5" fill="url(#hl)" opacity=".85"/>
<rect x="761.9" y="127.8" width="3" height="3" fill="#f1e51d"/>
<rect x="761.9" y="130.8" width="3" height="1.5" fill="#7ad151"/>
<rect x="506.7" y="127.8" width="3" height="3" fill="#2fa084" opacity=".75"/>
<rect x="411.4" y="127.8" width="3" height="3" fill="#2fa084" opacity=".75"/>
<rect x="404.2" y="147.0" width="16" height="2" fill="#2b8a8c" opacity=".4"/>
<ellipse cx="406.2" cy="148.5" rx="6.5" ry="5" fill="url(#hl)" opacity=".8"/>
<rect x="404.2" y="146.0" width="4" height="4" fill="#fde725"/>
<rect x="453.7" y="147.0" width="24" height="2" fill="#2b8a8c" opacity=".5"/>
<ellipse cx="458.2" cy="149.0" rx="14" ry="9" fill="url(#hl)"/>
<rect x="453.7" y="146.0" width="6" height="4" fill="#fde725"/>
<rect x="454.7" y="150.0" width="4" height="2.5" fill="#7ad151" opacity=".85"/>
<rect x="505.2" y="147.0" width="22" height="2" fill="#2b8a8c" opacity=".5"/>
<ellipse cx="509.2" cy="148.5" rx="11" ry="7" fill="url(#hl)"/>
<rect x="505.2" y="146.0" width="6" height="4" fill="#fde725"/>
<rect x="557.6" y="147.0" width="16" height="2" fill="#2b8a8c" opacity=".4"/>
<ellipse cx="559.6" cy="148.5" rx="6.5" ry="5" fill="url(#hl)" opacity=".8"/>
<rect x="557.6" y="146.0" width="4" height="4" fill="#fde725"/>
<rect x="608.6" y="147.0" width="16" height="2" fill="#2b8a8c" opacity=".4"/>
<ellipse cx="610.6" cy="148.5" rx="6.5" ry="5" fill="url(#hl)" opacity=".8"/>
<rect x="608.6" y="146.0" width="4" height="4" fill="#fde725"/>
<ellipse cx="661.5" cy="148.5" rx="5.5" ry="4.5" fill="url(#hl)" opacity=".85"/>
<rect x="660.0" y="146.5" width="3" height="3" fill="#f1e51d"/>
<rect x="660.0" y="149.5" width="3" height="1.5" fill="#7ad151"/>
<rect x="709.5" y="147.0" width="24" height="2" fill="#2b8a8c" opacity=".5"/>
<ellipse cx="714.0" cy="149.0" rx="14" ry="9" fill="url(#hl)"/>
<rect x="709.5" y="146.0" width="6" height="4" fill="#fde725"/>
<rect x="710.5" y="150.0" width="4" height="2.5" fill="#7ad151" opacity=".85"/>
<rect x="761.4" y="147.0" width="16" height="2" fill="#2b8a8c" opacity=".4"/>
<ellipse cx="763.4" cy="148.5" rx="6.5" ry="5" fill="url(#hl)" opacity=".8"/>
<rect x="761.4" y="146.0" width="4" height="4" fill="#fde725"/>
<ellipse cx="456.7" cy="167.1" rx="5.5" ry="4.5" fill="url(#hl)" opacity=".85"/>
<rect x="455.2" y="165.1" width="3" height="3" fill="#f1e51d"/>
<rect x="455.2" y="168.1" width="3" height="1.5" fill="#7ad151"/>
<rect x="506.7" y="165.1" width="3" height="3" fill="#2fa084" opacity=".75"/>
<rect x="558.1" y="165.1" width="3" height="3" fill="#2fa084" opacity=".75"/>
<ellipse cx="610.6" cy="167.1" rx="5.5" ry="4.5" fill="url(#hl)" opacity=".85"/>
<rect x="609.1" y="165.1" width="3" height="3" fill="#f1e51d"/>
<rect x="609.1" y="168.1" width="3" height="1.5" fill="#7ad151"/>
<ellipse cx="661.5" cy="167.1" rx="5.5" ry="4.5" fill="url(#hl)" opacity=".85"/>
<rect x="660.0" y="165.1" width="3" height="3" fill="#f1e51d"/>
<rect x="660.0" y="168.1" width="3" height="1.5" fill="#7ad151"/>
<ellipse cx="712.5" cy="167.1" rx="5.5" ry="4.5" fill="url(#hl)" opacity=".85"/>
<rect x="711.0" y="165.1" width="3" height="3" fill="#95d840"/>
<rect x="711.0" y="168.1" width="3" height="1.5" fill="#4ac16d"/>
<ellipse cx="763.4" cy="167.1" rx="5.5" ry="4.5" fill="url(#hl)" opacity=".85"/>
<rect x="761.9" y="165.1" width="3" height="3" fill="#f1e51d"/>
<rect x="761.9" y="168.1" width="3" height="1.5" fill="#7ad151"/>
<ellipse cx="379.7" cy="204.8" rx="5.5" ry="4.5" fill="url(#hl)" opacity=".85"/>
<rect x="378.2" y="202.8" width="3" height="3" fill="#95d840"/>
<rect x="378.2" y="205.8" width="3" height="1.5" fill="#4ac16d"/>
<rect x="429.2" y="202.8" width="3" height="3" fill="#2fa084" opacity=".75"/>
<ellipse cx="456.7" cy="204.8" rx="5.5" ry="4.5" fill="url(#hl)" opacity=".85"/>
<rect x="455.2" y="202.8" width="3" height="3" fill="#95d840"/>
<rect x="455.2" y="205.8" width="3" height="1.5" fill="#4ac16d"/>
<ellipse cx="508.2" cy="204.8" rx="5.5" ry="4.5" fill="url(#hl)" opacity=".85"/>
<rect x="506.7" y="202.8" width="3" height="3" fill="#95d840"/>
<rect x="506.7" y="205.8" width="3" height="1.5" fill="#4ac16d"/>
<rect x="558.1" y="202.8" width="3" height="3" fill="#2fa084" opacity=".75"/>
<ellipse cx="610.6" cy="204.8" rx="5.5" ry="4.5" fill="url(#hl)" opacity=".85"/>
<rect x="609.1" y="202.8" width="3" height="3" fill="#95d840"/>
<rect x="609.1" y="205.8" width="3" height="1.5" fill="#4ac16d"/>
<ellipse cx="661.5" cy="204.8" rx="5.5" ry="4.5" fill="url(#hl)" opacity=".85"/>
<rect x="660.0" y="202.8" width="3" height="3" fill="#95d840"/>
<rect x="660.0" y="205.8" width="3" height="1.5" fill="#4ac16d"/>
<rect x="685.5" y="202.8" width="3" height="3" fill="#2fa084" opacity=".75"/>
<rect x="761.4" y="203.3" width="16" height="2" fill="#2b8a8c" opacity=".4"/>
<ellipse cx="763.4" cy="204.8" rx="6.5" ry="5" fill="url(#hl)" opacity=".8"/>
<rect x="761.4" y="202.3" width="4" height="4" fill="#fde725"/>
<ellipse cx="789.9" cy="204.8" rx="5.5" ry="4.5" fill="url(#hl)" opacity=".85"/>
<rect x="788.4" y="202.8" width="3" height="3" fill="#f1e51d"/>
<rect x="788.4" y="205.8" width="3" height="1.5" fill="#7ad151"/>
<rect x="634.6" y="202.8" width="3" height="3" fill="#2fa084" opacity=".75"/>
<rect x="736.5" y="202.8" width="3" height="3" fill="#2fa084" opacity=".75"/>
<rect x="378.2" y="241.0" width="3" height="3" fill="#2fa084" opacity=".75"/>
<ellipse cx="482.2" cy="243.0" rx="5.5" ry="4.5" fill="url(#hl)" opacity=".85"/>
<rect x="480.7" y="241.0" width="3" height="3" fill="#f1e51d"/>
<rect x="480.7" y="244.0" width="3" height="1.5" fill="#7ad151"/>
<rect x="532.1" y="241.0" width="3" height="3" fill="#2fa084" opacity=".75"/>
<ellipse cx="585.1" cy="243.0" rx="5.5" ry="4.5" fill="url(#hl)" opacity=".85"/>
<rect x="583.6" y="241.0" width="3" height="3" fill="#f1e51d"/>
<rect x="583.6" y="244.0" width="3" height="1.5" fill="#7ad151"/>
<ellipse cx="636.1" cy="243.0" rx="5.5" ry="4.5" fill="url(#hl)" opacity=".85"/>
<rect x="634.6" y="241.0" width="3" height="3" fill="#f1e51d"/>
<rect x="634.6" y="244.0" width="3" height="1.5" fill="#7ad151"/>
<rect x="685.5" y="241.0" width="3" height="3" fill="#2fa084" opacity=".75"/>
<rect x="736.5" y="241.0" width="3" height="3" fill="#2fa084" opacity=".75"/>
<ellipse cx="789.9" cy="243.0" rx="5.5" ry="4.5" fill="url(#hl)" opacity=".85"/>
<rect x="788.4" y="241.0" width="3" height="3" fill="#f1e51d"/>
<rect x="788.4" y="244.0" width="3" height="1.5" fill="#7ad151"/>
<rect x="378.2" y="258.9" width="3" height="3" fill="#2fa084" opacity=".75"/>
<ellipse cx="430.7" cy="260.9" rx="5.5" ry="4.5" fill="url(#hl)" opacity=".85"/>
<rect x="429.2" y="258.9" width="3" height="3" fill="#f1e51d"/>
<rect x="429.2" y="261.9" width="3" height="1.5" fill="#7ad151"/>
<rect x="479.2" y="259.4" width="24" height="2" fill="#2b8a8c" opacity=".5"/>
<ellipse cx="483.7" cy="261.4" rx="14" ry="9" fill="url(#hl)"/>
<rect x="479.2" y="258.4" width="6" height="4" fill="#fde725"/>
<rect x="480.2" y="262.4" width="4" height="2.5" fill="#7ad151" opacity=".85"/>
<rect x="531.6" y="259.4" width="16" height="2" fill="#2b8a8c" opacity=".4"/>
<ellipse cx="533.6" cy="260.9" rx="6.5" ry="5" fill="url(#hl)" opacity=".8"/>
<rect x="531.6" y="258.4" width="4" height="4" fill="#fde725"/>
<rect x="582.1" y="259.4" width="24" height="2" fill="#2b8a8c" opacity=".5"/>
<ellipse cx="586.6" cy="261.4" rx="14" ry="9" fill="url(#hl)"/>
<rect x="582.1" y="258.4" width="6" height="4" fill="#fde725"/>
<rect x="583.1" y="262.4" width="4" height="2.5" fill="#7ad151" opacity=".85"/>
<ellipse cx="636.1" cy="260.9" rx="11" ry="8" fill="url(#hl)"/>
<rect x="633.6" y="257.9" width="5" height="5" fill="#fde725"/>
<rect x="736.0" y="259.4" width="16" height="2" fill="#2b8a8c" opacity=".4"/>
<ellipse cx="738.0" cy="260.9" rx="6.5" ry="5" fill="url(#hl)" opacity=".8"/>
<rect x="736.0" y="258.4" width="4" height="4" fill="#fde725"/>
<rect x="788.4" y="258.9" width="3" height="3" fill="#2fa084" opacity=".75"/>
<rect x="685.5" y="258.9" width="3" height="3" fill="#2fa084" opacity=".75"/>
<ellipse cx="379.7" cy="279.5" rx="5.5" ry="4.5" fill="url(#hl)" opacity=".85"/>
<rect x="378.2" y="277.5" width="3" height="3" fill="#95d840"/>
<rect x="378.2" y="280.5" width="3" height="1.5" fill="#4ac16d"/>
<rect x="429.2" y="277.5" width="3" height="3" fill="#2fa084" opacity=".75"/>
<ellipse cx="482.2" cy="279.5" rx="5.5" ry="4.5" fill="url(#hl)" opacity=".85"/>
<rect x="480.7" y="277.5" width="3" height="3" fill="#f1e51d"/>
<rect x="480.7" y="280.5" width="3" height="1.5" fill="#7ad151"/>
<rect x="532.1" y="277.5" width="3" height="3" fill="#2fa084" opacity=".75"/>
<ellipse cx="585.1" cy="279.5" rx="5.5" ry="4.5" fill="url(#hl)" opacity=".85"/>
<rect x="583.6" y="277.5" width="3" height="3" fill="#f1e51d"/>
<rect x="583.6" y="280.5" width="3" height="1.5" fill="#7ad151"/>
<ellipse cx="636.1" cy="279.5" rx="5.5" ry="4.5" fill="url(#hl)" opacity=".85"/>
<rect x="634.6" y="277.5" width="3" height="3" fill="#f1e51d"/>
<rect x="634.6" y="280.5" width="3" height="1.5" fill="#7ad151"/>
<rect x="685.5" y="277.5" width="3" height="3" fill="#2fa084" opacity=".75"/>
<rect x="736.5" y="277.5" width="3" height="3" fill="#2fa084" opacity=".75"/>
<ellipse cx="789.9" cy="279.5" rx="5.5" ry="4.5" fill="url(#hl)" opacity=".85"/>
<rect x="788.4" y="277.5" width="3" height="3" fill="#f1e51d"/>
<rect x="788.4" y="280.5" width="3" height="1.5" fill="#7ad151"/>
<ellipse cx="379.7" cy="317.5" rx="5.5" ry="4.5" fill="url(#hl)" opacity=".85"/>
<rect x="378.2" y="315.5" width="3" height="3" fill="#95d840"/>
<rect x="378.2" y="318.5" width="3" height="1.5" fill="#4ac16d"/>
<rect x="403.7" y="315.5" width="3" height="3" fill="#2fa084" opacity=".75"/>
<ellipse cx="456.7" cy="317.5" rx="5.5" ry="4.5" fill="url(#hl)" opacity=".85"/>
<rect x="455.2" y="315.5" width="3" height="3" fill="#95d840"/>
<rect x="455.2" y="318.5" width="3" height="1.5" fill="#4ac16d"/>
<ellipse cx="508.2" cy="317.5" rx="5.5" ry="4.5" fill="url(#hl)" opacity=".85"/>
<rect x="506.7" y="315.5" width="3" height="3" fill="#95d840"/>
<rect x="506.7" y="318.5" width="3" height="1.5" fill="#4ac16d"/>
<rect x="532.1" y="315.5" width="3" height="3" fill="#2fa084" opacity=".75"/>
<ellipse cx="559.6" cy="317.5" rx="5.5" ry="4.5" fill="url(#hl)" opacity=".85"/>
<rect x="558.1" y="315.5" width="3" height="3" fill="#95d840"/>
<rect x="558.1" y="318.5" width="3" height="1.5" fill="#4ac16d"/>
<ellipse cx="610.6" cy="317.5" rx="5.5" ry="4.5" fill="url(#hl)" opacity=".85"/>
<rect x="609.1" y="315.5" width="3" height="3" fill="#95d840"/>
<rect x="609.1" y="318.5" width="3" height="1.5" fill="#4ac16d"/>
<ellipse cx="661.5" cy="317.5" rx="5.5" ry="4.5" fill="url(#hl)" opacity=".85"/>
<rect x="660.0" y="315.5" width="3" height="3" fill="#95d840"/>
<rect x="660.0" y="318.5" width="3" height="1.5" fill="#4ac16d"/>
<rect x="685.5" y="315.5" width="3" height="3" fill="#2fa084" opacity=".75"/>
<ellipse cx="738.0" cy="317.5" rx="5.5" ry="4.5" fill="url(#hl)" opacity=".85"/>
<rect x="736.5" y="315.5" width="3" height="3" fill="#95d840"/>
<rect x="736.5" y="318.5" width="3" height="1.5" fill="#4ac16d"/>
<ellipse cx="763.4" cy="317.5" rx="5.5" ry="4.5" fill="url(#hl)" opacity=".85"/>
<rect x="761.9" y="315.5" width="3" height="3" fill="#f1e51d"/>
<rect x="761.9" y="318.5" width="3" height="1.5" fill="#7ad151"/>
<ellipse cx="789.9" cy="317.5" rx="5.5" ry="4.5" fill="url(#hl)" opacity=".85"/>
<rect x="788.4" y="315.5" width="3" height="3" fill="#f1e51d"/>
<rect x="788.4" y="318.5" width="3" height="1.5" fill="#7ad151"/>
<rect x="711.0" y="315.5" width="3" height="3" fill="#2fa084" opacity=".75"/>
<ellipse cx="456.7" cy="355.5" rx="5.5" ry="4.5" fill="url(#hl)" opacity=".85"/>
<rect x="455.2" y="353.5" width="3" height="3" fill="#f1e51d"/>
<rect x="455.2" y="356.5" width="3" height="1.5" fill="#7ad151"/>
<rect x="506.7" y="353.5" width="3" height="3" fill="#2fa084" opacity=".75"/>
<ellipse cx="559.6" cy="355.5" rx="5.5" ry="4.5" fill="url(#hl)" opacity=".85"/>
<rect x="558.1" y="353.5" width="3" height="3" fill="#f1e51d"/>
<rect x="558.1" y="356.5" width="3" height="1.5" fill="#7ad151"/>
<ellipse cx="610.6" cy="355.5" rx="5.5" ry="4.5" fill="url(#hl)" opacity=".85"/>
<rect x="609.1" y="353.5" width="3" height="3" fill="#f1e51d"/>
<rect x="609.1" y="356.5" width="3" height="1.5" fill="#7ad151"/>
<ellipse cx="661.5" cy="355.5" rx="5.5" ry="4.5" fill="url(#hl)" opacity=".85"/>
<rect x="660.0" y="353.5" width="3" height="3" fill="#f1e51d"/>
<rect x="660.0" y="356.5" width="3" height="1.5" fill="#7ad151"/>
<rect x="711.0" y="353.5" width="3" height="3" fill="#2fa084" opacity=".75"/>
<ellipse cx="763.4" cy="355.5" rx="5.5" ry="4.5" fill="url(#hl)" opacity=".85"/>
<rect x="761.9" y="353.5" width="3" height="3" fill="#f1e51d"/>
<rect x="761.9" y="356.5" width="3" height="1.5" fill="#7ad151"/>
<rect x="368.5" y="316" width="441" height="2" fill="#3a7f8c" opacity=".18"/>
<rect x="368.5" y="203.5" width="441" height="2" fill="#3a7f8c" opacity=".12"/>
<rect x="540.5" y="217" width="3" height="2.5" fill="#000"/><rect x="407" y="188.5" width="1.2" height="2" fill="#000"/>
<line x1="369" y1="306.3" x2="809" y2="306.3" stroke="#c6c1c5" stroke-width="2.6" stroke-dasharray="2.7 4.66" stroke-dashoffset="-1"/>
<line x1="369" y1="329.2" x2="809" y2="329.2" stroke="#c6c1c5" stroke-width="2.6" stroke-dasharray="2.7 4.66" stroke-dashoffset="-1"/>
<line x1="808.6" y1="306" x2="808.6" y2="329" stroke="#d9cfd6" stroke-width="1" stroke-dasharray="2 3" opacity=".7"/>
<rect x="368.5" y="113.5" width="441" height="262" fill="none" stroke="#000" stroke-width="1"/>
<line x1="363.8" y1="147.3" x2="368.5" y2="147.3" stroke="#000" stroke-width="1.1"/>
<text x="358.2" y="152" text-anchor="end" font-size="14.5" textLength="23" lengthAdjust="spacingAndGlyphs" style="font-family:'Liberation Sans',sans-serif;">3.0</text>
<line x1="363.8" y1="203.8" x2="368.5" y2="203.8" stroke="#000" stroke-width="1.1"/>
<text x="358.2" y="208.5" text-anchor="end" font-size="14.5" textLength="23" lengthAdjust="spacingAndGlyphs" style="font-family:'Liberation Sans',sans-serif;">2.5</text>
<line x1="363.8" y1="260.3" x2="368.5" y2="260.3" stroke="#000" stroke-width="1.1"/>
<text x="358.2" y="265" text-anchor="end" font-size="14.5" textLength="23" lengthAdjust="spacingAndGlyphs" style="font-family:'Liberation Sans',sans-serif;">2.0</text>
<line x1="363.8" y1="316.8" x2="368.5" y2="316.8" stroke="#000" stroke-width="1.1"/>
<text x="358.2" y="321.5" text-anchor="end" font-size="14.5" textLength="23" lengthAdjust="spacingAndGlyphs" style="font-family:'Liberation Sans',sans-serif;">1.5</text>
<text transform="translate(326.7,284.5) rotate(-90)" text-anchor="middle" font-size="14.5" textLength="19" lengthAdjust="spacingAndGlyphs" style="font-family:'Liberation Sans',sans-serif;">Qk</text>
<text x="588.7" y="104.5" text-anchor="middle" font-size="17" textLength="334" lengthAdjust="spacingAndGlyphs" style="font-family:'Liberation Sans',sans-serif;">na04v2o5_30K/entry/masked_transform</text>
<rect x="837.5" y="113.5" width="17.5" height="262" fill="url(#cb1)" stroke="#000" stroke-width="1"/>
<line x1="855" y1="113.5" x2="859.8" y2="113.5" stroke="#000" stroke-width="1"/>
<line x1="855" y1="121.3" x2="858" y2="121.3" stroke="#000" stroke-width="1"/>
<line x1="855" y1="129.9" x2="858" y2="129.9" stroke="#000" stroke-width="1"/>
<line x1="855" y1="139.8" x2="858" y2="139.8" stroke="#000" stroke-width="1"/>
<line x1="855" y1="151.1" x2="858" y2="151.1" stroke="#000" stroke-width="1"/>
<line x1="855" y1="164.5" x2="858" y2="164.5" stroke="#000" stroke-width="1"/>
<line x1="855" y1="181.0" x2="858" y2="181.0" stroke="#000" stroke-width="1"/>
<line x1="855" y1="202.1" x2="858" y2="202.1" stroke="#000" stroke-width="1"/>
<line x1="855" y1="232.0" x2="858" y2="232.0" stroke="#000" stroke-width="1"/>
<line x1="855" y1="283.0" x2="859.8" y2="283.0" stroke="#000" stroke-width="1"/>
<line x1="855" y1="290.8" x2="858" y2="290.8" stroke="#000" stroke-width="1"/>
<line x1="855" y1="299.4" x2="858" y2="299.4" stroke="#000" stroke-width="1"/>
<line x1="855" y1="309.3" x2="858" y2="309.3" stroke="#000" stroke-width="1"/>
<line x1="855" y1="320.6" x2="858" y2="320.6" stroke="#000" stroke-width="1"/>
<line x1="855" y1="334.0" x2="858" y2="334.0" stroke="#000" stroke-width="1"/>
<line x1="855" y1="350.5" x2="858" y2="350.5" stroke="#000" stroke-width="1"/>
<text x="866" y="120.2" font-size="14.5" style="font-family:'Liberation Sans',sans-serif;">10</text><text x="882" y="115.3" font-size="10" style="font-family:'Liberation Sans',sans-serif;">2</text>
<text x="866" y="289.7" font-size="14.5" style="font-family:'Liberation Sans',sans-serif;">10</text><text x="882" y="284.8" font-size="10" style="font-family:'Liberation Sans',sans-serif;">1</text>
</svg>
<div class="win" style="left:161px;top:363px;width:734px;height:572px;">
<div class="tb"></div>
<div class="tl" style="left:8px;top:4.5px"></div>
<div class="tl" style="left:28px;top:4.5px"></div>
<div class="tl" style="left:48px;top:4.5px"></div>
<svg style="position:absolute;left:342.0px;top:4px" width="15" height="15" viewBox="0 0 15 15"><rect x="0.5" y="0.5" width="13.5" height="13.5" fill="#fbfbfb" stroke="#d6d6d6" stroke-width="1"/><path d="M11.3 3.2 L2.4 14" stroke="#c4c4c4" stroke-width="1.1" fill="none"/><path d="M3.4 3.2 L12.2 14" stroke="#848484" stroke-width="1.9" fill="none"/></svg>
</div>
<div id="scanwin" style="position:absolute;left:161px;top:363px;width:734px;height:572px;overflow:hidden;"><div style="position:absolute;left:-161px;top:-363px;">
<div class="t" style="left:524.0px;top:366.5px;font-size:13px;line-height:16px;color:#6b6b6b;letter-spacing:-0.03px;">Scan</div>
<div style="position:absolute;left:173px;top:397px;width:710px;height:440px;background:#fff;"></div>
<svg style="position:absolute;left:173px;top:397px" width="710" height="439" viewBox="173 397 710 439">
<defs><linearGradient id="cb2" x1="0" y1="1" x2="0" y2="0">
<stop offset="0.0" stop-color="#440154"/>
<stop offset="0.1" stop-color="#482475"/>
<stop offset="0.2" stop-color="#414487"/>
<stop offset="0.3" stop-color="#355f8d"/>
<stop offset="0.4" stop-color="#2a788e"/>
<stop offset="0.5" stop-color="#21918c"/>
<stop offset="0.6" stop-color="#22a884"/>
<stop offset="0.7" stop-color="#44bf70"/>
<stop offset="0.8" stop-color="#7ad151"/>
<stop offset="0.9" stop-color="#bddf26"/>
<stop offset="1.0" stop-color="#fde725"/>
</linearGradient><linearGradient id="tb" x1="0" y1="0" x2="1" y2="0"><stop offset="0" stop-color="#472a7a" stop-opacity=".55"/><stop offset="0.5" stop-color="#472a7a" stop-opacity=".25"/><stop offset="1" stop-color="#472a7a" stop-opacity="0"/></linearGradient>
<filter id="vs" x="0" y="0" width="100%" height="100%" color-interpolation-filters="sRGB"><feTurbulence type="fractalNoise" baseFrequency="0.3 0.0001" numOctaves="2" seed="7"/><feColorMatrix values="0 0 0 0 0.29  0 0 0 0 0.17  0 0 0 0 0.50  0 0 1.6 0 -0.55"/></filter>
<linearGradient id="g1" x1="0" y1="0" x2="0" y2="1"><stop offset="0.003" stop-color="#471b6d" stop-opacity="0"/><stop offset="0.212" stop-color="#471b6d" stop-opacity="0"/><stop offset="0.250" stop-color="#482273"/><stop offset="0.288" stop-color="#472877"/><stop offset="0.334" stop-color="#462e7b"/><stop offset="0.391" stop-color="#45327d"/><stop offset="0.448" stop-color="#45347e"/><stop offset="0.524" stop-color="#443780"/><stop offset="0.615" stop-color="#433a81"/><stop offset="0.623" stop-color="#433c82"/><stop offset="0.767" stop-color="#423f84"/><stop offset="0.775" stop-color="#414286"/><stop offset="0.957" stop-color="#414286"/><stop offset="0.964" stop-color="#414286"/><stop offset="1.000" stop-color="#414286"/></linearGradient><linearGradient id="g2" x1="0" y1="0" x2="0" y2="1"><stop offset="0.003" stop-color="#471b6d" stop-opacity="0"/><stop offset="0.212" stop-color="#471b6d" stop-opacity="0"/><stop offset="0.250" stop-color="#482072"/><stop offset="0.288" stop-color="#482676"/><stop offset="0.334" stop-color="#462b79"/><stop offset="0.391" stop-color="#462e7b"/><stop offset="0.448" stop-color="#45307c"/><stop offset="0.524" stop-color="#45327d"/><stop offset="0.615" stop-color="#44357f"/><stop offset="0.623" stop-color="#44377f"/><stop offset="0.767" stop-color="#433981"/><stop offset="0.775" stop-color="#433c82"/><stop offset="0.957" stop-color="#433c82"/><stop offset="0.964" stop-color="#433c82"/><stop offset="1.000" stop-color="#433c82"/></linearGradient><linearGradient id="g3" x1="0" y1="0" x2="0" y2="1"><stop offset="0.003" stop-color="#471b6d" stop-opacity="0"/><stop offset="0.212" stop-color="#471b6d" stop-opacity="0"/><stop offset="0.250" stop-color="#462c79"/><stop offset="0.288" stop-color="#433c82"/><stop offset="0.334" stop-color="#3d4d89"/><stop offset="0.391" stop-color="#3a558b"/><stop offset="0.448" stop-color="#375a8c"/><stop offset="0.524" stop-color="#34618d"/><stop offset="0.615" stop-color="#31688d"/><stop offset="0.623" stop-color="#2f6c8e"/><stop offset="0.767" stop-color="#2d728e"/><stop offset="0.775" stop-color="#297a8e"/><stop offset="0.957" stop-color="#297a8e"/><stop offset="0.964" stop-color="#297a8e"/><stop offset="1.000" stop-color="#297a8e"/></linearGradient><linearGradient id="g4" x1="0" y1="0" x2="0" y2="1"><stop offset="0.003" stop-color="#471b6d" stop-opacity="0"/><stop offset="0.212" stop-color="#471b6d" stop-opacity="0"/><stop offset="0.250" stop-color="#482072"/><stop offset="0.288" stop-color="#482676"/><stop offset="0.334" stop-color="#462b79"/><stop offset="0.391" stop-color="#462e7b"/><stop offset="0.448" stop-color="#45307c"/><stop offset="0.524" stop-color="#45327d"/><stop offset="0.615" stop-color="#44357f"/><stop offset="0.623" stop-color="#44377f"/><stop offset="0.767" stop-color="#433981"/><stop offset="0.775" stop-color="#433c82"/><stop offset="0.957" stop-color="#433c82"/><stop offset="0.964" stop-color="#433c82"/><stop offset="1.000" stop-color="#433c82"/></linearGradient><linearGradient id="g5" x1="0" y1="0" x2="0" y2="1"><stop offset="0.003" stop-color="#471b6d" stop-opacity="0"/><stop offset="0.212" stop-color="#471b6d" stop-opacity="0"/><stop offset="0.250" stop-color="#462c79"/><stop offset="0.288" stop-color="#433c82"/><stop offset="0.334" stop-color="#3d4d89"/><stop offset="0.391" stop-color="#3a558b"/><stop offset="0.448" stop-color="#375a8c"/><stop offset="0.524" stop-color="#34618d"/><stop offset="0.615" stop-color="#31688d"/><stop offset="0.623" stop-color="#2f6c8e"/><stop offset="0.767" stop-color="#2d728e"/><stop offset="0.775" stop-color="#297a8e"/><stop offset="0.957" stop-color="#297a8e"/><stop offset="0.964" stop-color="#297a8e"/><stop offset="1.000" stop-color="#297a8e"/></linearGradient><linearGradient id="g6" x1="0" y1="0" x2="0" y2="1"><stop offset="0.003" stop-color="#471b6d" stop-opacity="0"/><stop offset="0.212" stop-color="#471b6d" stop-opacity="0"/><stop offset="0.250" stop-color="#462f7b"/><stop offset="0.288" stop-color="#424185"/><stop offset="0.334" stop-color="#3a558b"/><stop offset="0.391" stop-color="#365d8d"/><stop offset="0.448" stop-color="#33638d"/><stop offset="0.524" stop-color="#306b8d"/><stop offset="0.615" stop-color="#2c738e"/><stop offset="0.623" stop-color="#2a778e"/><stop offset="0.767" stop-color="#287e8e"/><stop offset="0.775" stop-color="#24888d"/><stop offset="0.957" stop-color="#24888d"/><stop offset="0.964" stop-color="#24888d"/><stop offset="1.000" stop-color="#24888d"/></linearGradient><linearGradient id="g7" x1="0" y1="0" x2="0" y2="1"><stop offset="0.003" stop-color="#471b6d" stop-opacity="0"/><stop offset="0.212" stop-color="#471b6d" stop-opacity="0"/><stop offset="0.250" stop-color="#3f4888"/><stop offset="0.288" stop-color="#2f6c8e"/><stop offset="0.334" stop-color="#21958a"/><stop offset="0.391" stop-color="#22a685"/><stop offset="0.448" stop-color="#32b37a"/><stop offset="0.524" stop-color="#50c369"/><stop offset="0.615" stop-color="#78d052"/><stop offset="0.623" stop-color="#97d73f"/><stop offset="0.767" stop-color="#c2e026"/><stop offset="0.775" stop-color="#fde725"/><stop offset="0.957" stop-color="#fde725"/><stop offset="0.964" stop-color="#fde725"/><stop offset="1.000" stop-color="#fde725"/></linearGradient><linearGradient id="g8" x1="0" y1="0" x2="0" y2="1"><stop offset="0.003" stop-color="#471b6d" stop-opacity="0"/><stop offset="0.212" stop-color="#471b6d" stop-opacity="0"/><stop offset="0.250" stop-color="#462c7a"/><stop offset="0.288" stop-color="#433c83"/><stop offset="0.334" stop-color="#3d4e89"/><stop offset="0.391" stop-color="#39558b"/><stop offset="0.448" stop-color="#375a8c"/><stop offset="0.524" stop-color="#34618d"/><stop offset="0.615" stop-color="#31688d"/><stop offset="0.623" stop-color="#2f6c8e"/><stop offset="0.767" stop-color="#2d728e"/><stop offset="0.775" stop-color="#25868d"/><stop offset="0.957" stop-color="#25868d"/><stop offset="0.964" stop-color="#2a798e"/><stop offset="1.000" stop-color="#2a798e"/></linearGradient><linearGradient id="g9" x1="0" y1="0" x2="0" y2="1"><stop offset="0.003" stop-color="#471b6d" stop-opacity="0"/><stop offset="0.212" stop-color="#471b6d" stop-opacity="0"/><stop offset="0.250" stop-color="#414286"/><stop offset="0.288" stop-color="#33638d"/><stop offset="0.334" stop-color="#25868d"/><stop offset="0.391" stop-color="#21968a"/><stop offset="0.448" stop-color="#22a186"/><stop offset="0.524" stop-color="#2db07d"/><stop offset="0.615" stop-color="#43be71"/><stop offset="0.623" stop-color="#58c664"/><stop offset="0.767" stop-color="#76d053"/><stop offset="0.775" stop-color="#f1e625"/><stop offset="0.957" stop-color="#f1e625"/><stop offset="0.964" stop-color="#9fd93a"/><stop offset="1.000" stop-color="#9fd93a"/></linearGradient><linearGradient id="g10" x1="0" y1="0" x2="0" y2="1"><stop offset="0.003" stop-color="#471b6d" stop-opacity="0"/><stop offset="0.212" stop-color="#471b6d" stop-opacity="0"/><stop offset="0.250" stop-color="#482172"/><stop offset="0.288" stop-color="#472776"/><stop offset="0.334" stop-color="#462d7a"/><stop offset="0.391" stop-color="#45307c"/><stop offset="0.448" stop-color="#45327d"/><stop offset="0.524" stop-color="#44357e"/><stop offset="0.615" stop-color="#443880"/><stop offset="0.623" stop-color="#433981"/><stop offset="0.767" stop-color="#433c82"/><stop offset="0.775" stop-color="#424084"/><stop offset="0.957" stop-color="#424084"/><stop offset="0.964" stop-color="#424084"/><stop offset="1.000" stop-color="#424084"/></linearGradient><linearGradient id="g11" x1="0" y1="0" x2="0" y2="1"><stop offset="0.003" stop-color="#471b6d" stop-opacity="0"/><stop offset="0.212" stop-color="#471b6d" stop-opacity="0"/><stop offset="0.250" stop-color="#462e7a"/><stop offset="0.288" stop-color="#424084"/><stop offset="0.334" stop-color="#3b528a"/><stop offset="0.391" stop-color="#375a8c"/><stop offset="0.448" stop-color="#35608d"/><stop offset="0.524" stop-color="#31688d"/><stop offset="0.615" stop-color="#2e6f8e"/><stop offset="0.623" stop-color="#2c748e"/><stop offset="0.767" stop-color="#297a8e"/><stop offset="0.775" stop-color="#26838d"/><stop offset="0.957" stop-color="#26838d"/><stop offset="0.964" stop-color="#26838d"/><stop offset="1.000" stop-color="#26838d"/></linearGradient><linearGradient id="g12" x1="0" y1="0" x2="0" y2="1"><stop offset="0.003" stop-color="#471b6d" stop-opacity="0"/><stop offset="0.212" stop-color="#471b6d" stop-opacity="0"/><stop offset="0.250" stop-color="#482172"/><stop offset="0.288" stop-color="#472776"/><stop offset="0.334" stop-color="#462d7a"/><stop offset="0.391" stop-color="#45307c"/><stop offset="0.448" stop-color="#45327d"/><stop offset="0.524" stop-color="#44357e"/><stop offset="0.615" stop-color="#443880"/><stop offset="0.623" stop-color="#433981"/><stop offset="0.767" stop-color="#433c82"/><stop offset="0.775" stop-color="#424084"/><stop offset="0.957" stop-color="#424084"/><stop offset="0.964" stop-color="#424084"/><stop offset="1.000" stop-color="#424084"/></linearGradient><linearGradient id="g13" x1="0" y1="0" x2="0" y2="1"><stop offset="0.003" stop-color="#471b6d" stop-opacity="0"/><stop offset="0.212" stop-color="#471b6d" stop-opacity="0"/><stop offset="0.250" stop-color="#482172"/><stop offset="0.288" stop-color="#472776"/><stop offset="0.334" stop-color="#462d7a"/><stop offset="0.391" stop-color="#45307c"/><stop offset="0.448" stop-color="#45327d"/><stop offset="0.524" stop-color="#44357e"/><stop offset="0.615" stop-color="#443880"/><stop offset="0.623" stop-color="#433981"/><stop offset="0.767" stop-color="#433c82"/><stop offset="0.775" stop-color="#424084"/><stop offset="0.957" stop-color="#424084"/><stop offset="0.964" stop-color="#424084"/><stop offset="1.000" stop-color="#424084"/></linearGradient><linearGradient id="g14" x1="0" y1="0" x2="0" y2="1"><stop offset="0.003" stop-color="#471b6d" stop-opacity="0"/><stop offset="0.212" stop-color="#471b6d" stop-opacity="0"/><stop offset="0.250" stop-color="#462e7a"/><stop offset="0.288" stop-color="#424084"/><stop offset="0.334" stop-color="#3b528a"/><stop offset="0.391" stop-color="#375a8c"/><stop offset="0.448" stop-color="#35608d"/><stop offset="0.524" stop-color="#31688d"/><stop offset="0.615" stop-color="#2e6f8e"/><stop offset="0.623" stop-color="#2c748e"/><stop offset="0.767" stop-color="#297a8e"/><stop offset="0.775" stop-color="#26838d"/><stop offset="0.957" stop-color="#26838d"/><stop offset="0.964" stop-color="#26838d"/><stop offset="1.000" stop-color="#26838d"/></linearGradient><linearGradient id="g15" x1="0" y1="0" x2="0" y2="1"><stop offset="0.003" stop-color="#471b6d" stop-opacity="0"/><stop offset="0.212" stop-color="#471b6d" stop-opacity="0"/><stop offset="0.250" stop-color="#482173"/><stop offset="0.288" stop-color="#472777"/><stop offset="0.334" stop-color="#462e7b"/><stop offset="0.391" stop-color="#45317c"/><stop offset="0.448" stop-color="#45337e"/><stop offset="0.524" stop-color="#44367f"/><stop offset="0.615" stop-color="#433981"/><stop offset="0.623" stop-color="#433b82"/><stop offset="0.767" stop-color="#423e83"/><stop offset="0.775" stop-color="#424185"/><stop offset="0.957" stop-color="#424185"/><stop offset="0.964" stop-color="#424185"/><stop offset="1.000" stop-color="#424185"/></linearGradient><linearGradient id="g16" x1="0" y1="0" x2="0" y2="1"><stop offset="0.003" stop-color="#471b6d" stop-opacity="0"/><stop offset="0.212" stop-color="#471b6d" stop-opacity="0"/><stop offset="0.250" stop-color="#462f7b"/><stop offset="0.288" stop-color="#424185"/><stop offset="0.334" stop-color="#3a558b"/><stop offset="0.391" stop-color="#365d8d"/><stop offset="0.448" stop-color="#33638d"/><stop offset="0.524" stop-color="#306b8d"/><stop offset="0.615" stop-color="#2c738e"/><stop offset="0.623" stop-color="#2a778e"/><stop offset="0.767" stop-color="#287e8e"/><stop offset="0.775" stop-color="#24888d"/><stop offset="0.957" stop-color="#24888d"/><stop offset="0.964" stop-color="#24888d"/><stop offset="1.000" stop-color="#24888d"/></linearGradient><linearGradient id="g17" x1="0" y1="0" x2="0" y2="1"><stop offset="0.003" stop-color="#471b6d" stop-opacity="0"/><stop offset="0.212" stop-color="#471b6d" stop-opacity="0"/><stop offset="0.250" stop-color="#482374"/><stop offset="0.288" stop-color="#472a78"/><stop offset="0.334" stop-color="#45327d"/><stop offset="0.391" stop-color="#44367f"/><stop offset="0.448" stop-color="#433981"/><stop offset="0.524" stop-color="#433c83"/><stop offset="0.615" stop-color="#424085"/><stop offset="0.623" stop-color="#414286"/><stop offset="0.767" stop-color="#404587"/><stop offset="0.775" stop-color="#3f4988"/><stop offset="0.957" stop-color="#3f4988"/><stop offset="0.964" stop-color="#3f4988"/><stop offset="1.000" stop-color="#3f4988"/></linearGradient><linearGradient id="g18" x1="0" y1="0" x2="0" y2="1"><stop offset="0.003" stop-color="#471b6d" stop-opacity="0"/><stop offset="0.212" stop-color="#471b6d" stop-opacity="0"/><stop offset="0.250" stop-color="#45337d"/><stop offset="0.288" stop-color="#3f4988"/><stop offset="0.334" stop-color="#34608d"/><stop offset="0.391" stop-color="#306a8d"/><stop offset="0.448" stop-color="#2d718e"/><stop offset="0.524" stop-color="#297b8e"/><stop offset="0.615" stop-color="#25858d"/><stop offset="0.623" stop-color="#238b8d"/><stop offset="0.767" stop-color="#21938b"/><stop offset="0.775" stop-color="#229e88"/><stop offset="0.957" stop-color="#229e88"/><stop offset="0.964" stop-color="#229e88"/><stop offset="1.000" stop-color="#229e88"/></linearGradient><linearGradient id="g19" x1="0" y1="0" x2="0" y2="1"><stop offset="0.003" stop-color="#471b6d" stop-opacity="0"/><stop offset="0.212" stop-color="#471b6d" stop-opacity="0"/><stop offset="0.250" stop-color="#482071"/><stop offset="0.288" stop-color="#482575"/><stop offset="0.334" stop-color="#472a78"/><stop offset="0.391" stop-color="#462d7a"/><stop offset="0.448" stop-color="#462e7b"/><stop offset="0.524" stop-color="#45317c"/><stop offset="0.615" stop-color="#45337d"/><stop offset="0.623" stop-color="#44357e"/><stop offset="0.767" stop-color="#44377f"/><stop offset="0.775" stop-color="#433a81"/><stop offset="0.957" stop-color="#433a81"/><stop offset="0.964" stop-color="#433a81"/><stop offset="1.000" stop-color="#433a81"/></linearGradient><linearGradient id="g20" x1="0" y1="0" x2="0" y2="1"><stop offset="0.003" stop-color="#471b6d" stop-opacity="0"/><stop offset="0.212" stop-color="#471b6d" stop-opacity="0"/><stop offset="0.250" stop-color="#482172"/><stop offset="0.288" stop-color="#472776"/><stop offset="0.334" stop-color="#462d7a"/><stop offset="0.391" stop-color="#45307c"/><stop offset="0.448" stop-color="#45327d"/><stop offset="0.524" stop-color="#44357e"/><stop offset="0.615" stop-color="#443880"/><stop offset="0.623" stop-color="#433981"/><stop offset="0.767" stop-color="#433c82"/><stop offset="0.775" stop-color="#424084"/><stop offset="0.957" stop-color="#424084"/><stop offset="0.964" stop-color="#424084"/><stop offset="1.000" stop-color="#424084"/></linearGradient><linearGradient id="g21" x1="0" y1="0" x2="0" y2="1"><stop offset="0.003" stop-color="#471b6d" stop-opacity="0"/><stop offset="0.212" stop-color="#471b6d" stop-opacity="0"/><stop offset="0.250" stop-color="#471f70"/><stop offset="0.288" stop-color="#482374"/><stop offset="0.334" stop-color="#472777"/><stop offset="0.391" stop-color="#472978"/><stop offset="0.448" stop-color="#472a79"/><stop offset="0.524" stop-color="#462c7a"/><stop offset="0.615" stop-color="#462e7b"/><stop offset="0.623" stop-color="#462f7b"/><stop offset="0.767" stop-color="#45317c"/><stop offset="0.775" stop-color="#45337d"/><stop offset="0.957" stop-color="#45337d"/><stop offset="0.964" stop-color="#45337d"/><stop offset="1.000" stop-color="#45337d"/></linearGradient><linearGradient id="g22" x1="0" y1="0" x2="0" y2="1"><stop offset="0.003" stop-color="#471b6d" stop-opacity="0"/><stop offset="0.212" stop-color="#471b6d" stop-opacity="0"/><stop offset="0.250" stop-color="#472877"/><stop offset="0.288" stop-color="#45337d"/><stop offset="0.334" stop-color="#424185"/><stop offset="0.391" stop-color="#404788"/><stop offset="0.448" stop-color="#3e4b88"/><stop offset="0.524" stop-color="#3c508a"/><stop offset="0.615" stop-color="#39558b"/><stop offset="0.623" stop-color="#38588b"/><stop offset="0.767" stop-color="#365d8c"/><stop offset="0.775" stop-color="#33638d"/><stop offset="0.957" stop-color="#33638d"/><stop offset="0.964" stop-color="#33638d"/><stop offset="1.000" stop-color="#33638d"/></linearGradient><linearGradient id="g23" x1="0" y1="0" x2="0" y2="1"><stop offset="0.003" stop-color="#471b6d" stop-opacity="0"/><stop offset="0.212" stop-color="#471b6d" stop-opacity="0"/><stop offset="0.250" stop-color="#482374"/><stop offset="0.288" stop-color="#462b79"/><stop offset="0.334" stop-color="#45347e"/><stop offset="0.391" stop-color="#443880"/><stop offset="0.448" stop-color="#433b82"/><stop offset="0.524" stop-color="#423f84"/><stop offset="0.615" stop-color="#414386"/><stop offset="0.623" stop-color="#414587"/><stop offset="0.767" stop-color="#3f4888"/><stop offset="0.775" stop-color="#3d4c89"/><stop offset="0.957" stop-color="#3d4c89"/><stop offset="0.964" stop-color="#3d4c89"/><stop offset="1.000" stop-color="#3d4c89"/></linearGradient><linearGradient id="g24" x1="0" y1="0" x2="0" y2="1"><stop offset="0.003" stop-color="#471b6d" stop-opacity="0"/><stop offset="0.212" stop-color="#471b6d" stop-opacity="0"/><stop offset="0.250" stop-color="#44357e"/><stop offset="0.288" stop-color="#3d4c89"/><stop offset="0.334" stop-color="#32658d"/><stop offset="0.391" stop-color="#2e6f8e"/><stop offset="0.448" stop-color="#2a778e"/><stop offset="0.524" stop-color="#27818d"/><stop offset="0.615" stop-color="#238c8c"/><stop offset="0.623" stop-color="#21928c"/><stop offset="0.767" stop-color="#219a89"/><stop offset="0.775" stop-color="#22a685"/><stop offset="0.957" stop-color="#22a685"/><stop offset="0.964" stop-color="#22a685"/><stop offset="1.000" stop-color="#22a685"/></linearGradient><linearGradient id="g25" x1="0" y1="0" x2="0" y2="1"><stop offset="0.003" stop-color="#471b6d" stop-opacity="0"/><stop offset="0.212" stop-color="#471b6d" stop-opacity="0"/><stop offset="0.250" stop-color="#472b79"/><stop offset="0.288" stop-color="#433981"/><stop offset="0.334" stop-color="#3f4a88"/><stop offset="0.391" stop-color="#3c508a"/><stop offset="0.448" stop-color="#39558b"/><stop offset="0.524" stop-color="#375c8c"/><stop offset="0.615" stop-color="#34628d"/><stop offset="0.623" stop-color="#32668d"/><stop offset="0.767" stop-color="#306b8d"/><stop offset="0.775" stop-color="#2c738e"/><stop offset="0.957" stop-color="#2c738e"/><stop offset="0.964" stop-color="#2c738e"/><stop offset="1.000" stop-color="#2c738e"/></linearGradient><linearGradient id="g26" x1="0" y1="0" x2="0" y2="1"><stop offset="0.003" stop-color="#471b6d" stop-opacity="0"/><stop offset="0.212" stop-color="#471b6d" stop-opacity="0"/><stop offset="0.250" stop-color="#423f84"/><stop offset="0.288" stop-color="#365d8c"/><stop offset="0.334" stop-color="#287d8e"/><stop offset="0.391" stop-color="#238c8c"/><stop offset="0.448" stop-color="#21968a"/><stop offset="0.524" stop-color="#22a386"/><stop offset="0.615" stop-color="#2fb17c"/><stop offset="0.623" stop-color="#3bb975"/><stop offset="0.767" stop-color="#51c368"/><stop offset="0.775" stop-color="#78d052"/><stop offset="0.957" stop-color="#78d052"/><stop offset="0.964" stop-color="#78d052"/><stop offset="1.000" stop-color="#78d052"/></linearGradient>
</defs>
<rect x="262.5" y="450.5" width="440.0" height="338.5" fill="#431767"/>
<rect x="262.5" y="450.5" width="440.0" height="32" fill="#47207160"/>
<rect x="262.5" y="450.5" width="440.0" height="32" fill="url(#tb)"/>
<rect x="346.0" y="450.5" width="6" height="32" fill="#473080" opacity=".45"/>
<rect x="262.5" y="450.5" width="440.0" height="338.5" filter="url(#vs)" opacity=".22"/>
<rect x="272.4" y="450.5" width="1.7" height="338.5" fill="url(#g1)"/>
<rect x="296.7" y="450.5" width="3.2" height="338.5" fill="url(#g2)"/>
<rect x="297.5" y="450.5" width="1.7" height="338.5" fill="url(#g3)"/>
<rect x="322.3" y="450.5" width="3.2" height="338.5" fill="url(#g4)"/>
<rect x="323.1" y="450.5" width="1.7" height="338.5" fill="url(#g5)"/>
<rect x="346.3" y="450.5" width="5.4" height="338.5" fill="url(#g6)"/>
<rect x="347.8" y="450.5" width="2.5" height="338.5" fill="url(#g7)"/>
<rect x="397.3" y="450.5" width="5.4" height="338.5" fill="url(#g8)"/>
<rect x="398.7" y="450.5" width="2.5" height="338.5" fill="url(#g9)"/>
<rect x="424.7" y="450.5" width="3.2" height="338.5" fill="url(#g10)"/>
<rect x="425.5" y="450.5" width="1.7" height="338.5" fill="url(#g11)"/>
<rect x="449.8" y="450.5" width="1.7" height="338.5" fill="url(#g12)"/>
<rect x="475.4" y="450.5" width="3.2" height="338.5" fill="url(#g13)"/>
<rect x="476.2" y="450.5" width="1.7" height="338.5" fill="url(#g14)"/>
<rect x="500.8" y="450.5" width="3.2" height="338.5" fill="url(#g15)"/>
<rect x="501.5" y="450.5" width="1.7" height="338.5" fill="url(#g16)"/>
<rect x="552.0" y="450.5" width="3.2" height="338.5" fill="url(#g17)"/>
<rect x="552.7" y="450.5" width="1.7" height="338.5" fill="url(#g18)"/>
<rect x="577.8" y="450.5" width="1.7" height="338.5" fill="url(#g19)"/>
<rect x="603.4" y="450.5" width="1.7" height="338.5" fill="url(#g20)"/>
<rect x="629.0" y="450.5" width="3.2" height="338.5" fill="url(#g21)"/>
<rect x="629.8" y="450.5" width="1.7" height="338.5" fill="url(#g22)"/>
<rect x="654.4" y="450.5" width="3.2" height="338.5" fill="url(#g23)"/>
<rect x="655.1" y="450.5" width="1.7" height="338.5" fill="url(#g24)"/>
<rect x="678.4" y="450.5" width="5.4" height="338.5" fill="url(#g25)"/>
<rect x="679.8" y="450.5" width="2.5" height="338.5" fill="url(#g26)"/>
<rect x="262.5" y="450.5" width="440.0" height="338.5" fill="none" stroke="#000" stroke-width="1"/>
<line x1="257.8" y1="499.2" x2="262.5" y2="499.2" stroke="#000" stroke-width="1.1"/>
<text x="252.8" y="504.3" text-anchor="end" font-size="14.5" textLength="26.2" lengthAdjust="spacingAndGlyphs" style="font-family:'Liberation Sans',sans-serif;">250</text>
<line x1="257.8" y1="563.5" x2="262.5" y2="563.5" stroke="#000" stroke-width="1.1"/>
<text x="252.8" y="568.6" text-anchor="end" font-size="14.5" textLength="26.2" lengthAdjust="spacingAndGlyphs" style="font-family:'Liberation Sans',sans-serif;">200</text>
<line x1="257.8" y1="627.8" x2="262.5" y2="627.8" stroke="#000" stroke-width="1.1"/>
<text x="252.8" y="632.9" text-anchor="end" font-size="14.5" textLength="26.2" lengthAdjust="spacingAndGlyphs" style="font-family:'Liberation Sans',sans-serif;">150</text>
<line x1="257.8" y1="692.1" x2="262.5" y2="692.1" stroke="#000" stroke-width="1.1"/>
<text x="252.8" y="697.2" text-anchor="end" font-size="14.5" textLength="26.2" lengthAdjust="spacingAndGlyphs" style="font-family:'Liberation Sans',sans-serif;">100</text>
<line x1="257.8" y1="756.4" x2="262.5" y2="756.4" stroke="#000" stroke-width="1.1"/>
<text x="252.8" y="761.5" text-anchor="end" font-size="14.5" textLength="17.5" lengthAdjust="spacingAndGlyphs" style="font-family:'Liberation Sans',sans-serif;">50</text>
<line x1="275.3" y1="789" x2="275.3" y2="793" stroke="#000"/>
<text x="275.3" y="809.4" text-anchor="middle" font-size="14.5" textLength="18.5" lengthAdjust="spacingAndGlyphs" style="font-family:'Liberation Sans',sans-serif;">14</text>
<line x1="326.5" y1="789" x2="326.5" y2="793" stroke="#000"/>
<text x="326.5" y="809.4" text-anchor="middle" font-size="14.5" textLength="18.5" lengthAdjust="spacingAndGlyphs" style="font-family:'Liberation Sans',sans-serif;">16</text>
<line x1="377.7" y1="789" x2="377.7" y2="793" stroke="#000"/>
<text x="377.7" y="809.4" text-anchor="middle" font-size="14.5" textLength="18.5" lengthAdjust="spacingAndGlyphs" style="font-family:'Liberation Sans',sans-serif;">18</text>
<line x1="428.9" y1="789" x2="428.9" y2="793" stroke="#000"/>
<text x="428.9" y="809.4" text-anchor="middle" font-size="14.5" textLength="18.5" lengthAdjust="spacingAndGlyphs" style="font-family:'Liberation Sans',sans-serif;">20</text>
<line x1="480.1" y1="789" x2="480.1" y2="793" stroke="#000"/>
<text x="480.1" y="809.4" text-anchor="middle" font-size="14.5" textLength="18.5" lengthAdjust="spacingAndGlyphs" style="font-family:'Liberation Sans',sans-serif;">22</text>
<line x1="531.3" y1="789" x2="531.3" y2="793" stroke="#000"/>
<text x="531.3" y="809.4" text-anchor="middle" font-size="14.5" textLength="18.5" lengthAdjust="spacingAndGlyphs" style="font-family:'Liberation Sans',sans-serif;">24</text>
<line x1="582.5" y1="789" x2="582.5" y2="793" stroke="#000"/>
<text x="582.5" y="809.4" text-anchor="middle" font-size="14.5" textLength="18.5" lengthAdjust="spacingAndGlyphs" style="font-family:'Liberation Sans',sans-serif;">26</text>
<line x1="633.7" y1="789" x2="633.7" y2="793" stroke="#000"/>
<text x="633.7" y="809.4" text-anchor="middle" font-size="14.5" textLength="18.5" lengthAdjust="spacingAndGlyphs" style="font-family:'Liberation Sans',sans-serif;">28</text>
<line x1="684.9" y1="789" x2="684.9" y2="793" stroke="#000"/>
<text x="684.9" y="809.4" text-anchor="middle" font-size="14.5" textLength="18.5" lengthAdjust="spacingAndGlyphs" style="font-family:'Liberation Sans',sans-serif;">30</text>
<text x="482.3" y="828.6" text-anchor="middle" font-size="14.5" textLength="19" lengthAdjust="spacingAndGlyphs" style="font-family:'Liberation Sans',sans-serif;">Qh</text>
<text transform="translate(216,620) rotate(-90)" text-anchor="middle" font-size="14.5" textLength="112.5" lengthAdjust="spacingAndGlyphs" style="font-family:'Liberation Sans',sans-serif;">temperature (K)</text>
<text x="481.8" y="442" text-anchor="middle" font-size="17" textLength="212" lengthAdjust="spacingAndGlyphs" style="font-family:'Liberation Sans',sans-serif;">/entry/masked_transform</text>
<rect x="729.5" y="450.5" width="17" height="338.5" fill="url(#cb2)" stroke="#000" stroke-width="1"/>
<line x1="746.5" y1="488.7" x2="751.6" y2="488.7" stroke="#000" stroke-width="1.1"/>
<text x="756.3" y="494.8" font-size="14.5" textLength="18.6" lengthAdjust="spacingAndGlyphs" style="font-family:'Liberation Sans',sans-serif;">14</text>
<line x1="746.5" y1="541.8" x2="751.6" y2="541.8" stroke="#000" stroke-width="1.1"/>
<text x="756.3" y="547.9" font-size="14.5" textLength="18.6" lengthAdjust="spacingAndGlyphs" style="font-family:'Liberation Sans',sans-serif;">12</text>
<line x1="746.5" y1="594.9" x2="751.6" y2="594.9" stroke="#000" stroke-width="1.1"/>
<text x="756.3" y="601.0" font-size="14.5" textLength="18.6" lengthAdjust="spacingAndGlyphs" style="font-family:'Liberation Sans',sans-serif;">10</text>
<line x1="746.5" y1="648" x2="751.6" y2="648" stroke="#000" stroke-width="1.1"/>
<text x="756.3" y="654.1" font-size="14.5" textLength="9.3" lengthAdjust="spacingAndGlyphs" style="font-family:'Liberation Sans',sans-serif;">8</text>
<line x1="746.5" y1="701" x2="751.6" y2="701" stroke="#000" stroke-width="1.1"/>
<text x="756.3" y="707.1" font-size="14.5" textLength="9.3" lengthAdjust="spacingAndGlyphs" style="font-family:'Liberation Sans',sans-serif;">6</text>
<line x1="746.5" y1="754" x2="751.6" y2="754" stroke="#000" stroke-width="1.1"/>
<text x="756.3" y="760.1" font-size="14.5" textLength="9.3" lengthAdjust="spacingAndGlyphs" style="font-family:'Liberation Sans',sans-serif;">4</text>
</svg>
<div style="position:absolute;left:173px;top:868px;width:722px;height:54px;background:#fcfaf8;border:1px solid #c4bfb9;box-sizing:border-box;"></div>
<div style="position:absolute;left:174px;top:843px;width:60px;height:27px;background:linear-gradient(#fefdfd,#fcfaf8);border:1px solid #c4bfb9;border-bottom:none;border-radius:3px 3px 0 0;box-sizing:border-box;"></div>
<div class="t" style="left:186.1px;top:848.8px;font-size:13.5px;line-height:16px;letter-spacing:0.12px;">signal</div>
<div style="position:absolute;left:234px;top:845px;width:31px;height:23px;background:linear-gradient(#f0edea,#e8e4e0);border:1px solid #c4bfb9;border-bottom:none;border-radius:3px 3px 0 0;box-sizing:border-box;"></div>
<div class="t" style="left:246.1px;top:849.8px;font-size:13.5px;line-height:16px;">x</div>
<div style="position:absolute;left:265px;top:845px;width:33px;height:23px;background:linear-gradient(#f0edea,#e8e4e0);border:1px solid #c4bfb9;border-bottom:none;border-radius:3px 3px 0 0;box-sizing:border-box;"></div>
<div class="t" style="left:278.1px;top:849.8px;font-size:13.5px;line-height:16px;">y</div>
<div style="position:absolute;left:298px;top:845px;width:68px;height:23px;background:linear-gradient(#f0edea,#e8e4e0);border:1px solid #c4bfb9;border-bottom:none;border-radius:3px 3px 0 0;box-sizing:border-box;"></div>
<div class="t" style="left:309.2px;top:849.8px;font-size:13.5px;line-height:16px;letter-spacing:0.35px;">options</div>
<div class="fld" style="left:184px;top:884px;width:100px;height:22px;"><div class="spb"><div class="au" style="left:2.5px;top:4.5px;border-left-width:4px;border-right-width:4px"></div><div class="ad" style="left:2.5px;top:13.0px;border-left-width:4px;border-right-width:4px;border-top-color:#a9a6a2"></div></div></div>
<div class="t" style="left:237.1px;top:887.8px;font-size:13.5px;line-height:16px;letter-spacing:0.06px;">2.66</div>
<div class="fld" style="left:507px;top:884px;width:100px;height:22px;"><div class="spb"><div class="au" style="left:2.5px;top:4.5px;border-left-width:4px;border-right-width:4px;border-bottom-color:#a9a6a2"></div><div class="ad" style="left:2.5px;top:13.0px;border-left-width:4px;border-right-width:4px"></div></div></div>
<div class="t" style="left:552.1px;top:887.8px;font-size:13.5px;line-height:16px;letter-spacing:0.14px;">15.46</div>
<div style="position:absolute;left:297px;top:893px;width:95px;height:5px;background:#d6d2cd;border:1px solid #b8b3ad;border-radius:3px;box-sizing:border-box;"></div>
<div style="position:absolute;left:291.5px;top:889.5px;width:12px;height:12.5px;background:linear-gradient(#fff,#f0eeec);border:1px solid #9f9a94;border-radius:3px;box-sizing:border-box;"></div>
<div style="position:absolute;left:400px;top:893px;width:99px;height:5px;background:#3d97d6;border:1px solid #2d78b4;border-radius:3px;box-sizing:border-box;"></div>
<div style="position:absolute;left:487.5px;top:889.5px;width:12px;height:12.5px;background:linear-gradient(#fff,#f0eeec);border:1px solid #9f9a94;border-radius:3px;box-sizing:border-box;"></div>
<div class="cb" style="left:613px;top:888px;"></div>
<div class="t" style="left:633.0px;top:888.3px;font-size:13.5px;line-height:16px;letter-spacing:-0.51px;">Log</div>
<div class="btn" style="left:666px;top:884px;width:99px;height:22px;"><div class="ad" style="right:8px;top:8.5px;border-left-width:4px;border-right-width:4px;border-top-width:4.5px"></div></div>
<div class="t" style="left:672.0px;top:887.8px;font-size:13.5px;line-height:16px;">viridis</div>
<div class="btn" style="left:772px;top:884px;width:99px;height:22px;"><div class="ad" style="right:8px;top:8.5px;border-left-width:4px;border-right-width:4px;border-top-width:4.5px"></div></div>
<div class="t" style="left:778.0px;top:887.8px;font-size:13.5px;line-height:16px;letter-spacing:-0.57px;">nearest</div>
</div></div>
<div class="win" style="left:895px;top:77px;width:356px;height:387px;">
<div class="tb"></div>
<div class="tl" style="left:8px;top:4.5px"></div>
<div class="tl" style="left:28px;top:4.5px"></div>
<div class="tl" style="left:48px;top:4.5px"></div>
<svg style="position:absolute;left:135.0px;top:4px" width="15" height="15" viewBox="0 0 15 15"><rect x="0.5" y="0.5" width="13.5" height="13.5" fill="#fbfbfb" stroke="#d6d6d6" stroke-width="1"/><path d="M11.3 3.2 L2.4 14" stroke="#c4c4c4" stroke-width="1.1" fill="none"/><path d="M3.4 3.2 L12.2 14" stroke="#848484" stroke-width="1.9" fill="none"/></svg>
</div>
<div id="scanpanel" style="position:absolute;left:895px;top:77px;width:356px;height:387px;overflow:hidden;"><div style="position:absolute;left:-895px;top:-77px;">
<div class="t" style="left:1050.5px;top:81.3px;font-size:13px;line-height:16px;color:#6b6b6b;">Scan Panel</div>
<div style="position:absolute;left:906px;top:134px;width:334px;height:288px;background:#fcfaf8;border:1px solid #c4bfb9;box-sizing:border-box;"></div>
<div style="position:absolute;left:906px;top:110px;width:53px;height:26px;background:linear-gradient(#fefdfd,#fcfaf8);border:1px solid #c4bfb9;border-bottom:none;border-radius:3px 3px 0 0;box-sizing:border-box;"></div>
<div class="t" style="left:918.2px;top:115.3px;font-size:13.5px;line-height:16px;letter-spacing:-0.19px;">Main</div>
<div class="t" style="left:921.0px;top:150.3px;font-size:13.5px;line-height:16px;letter-spacing:-0.42px;">X-Axis</div>
<div class="btn" style="left:969px;top:146px;width:100px;height:23px;"><div class="ad" style="right:8px;top:9.0px;border-left-width:4px;border-right-width:4px;border-top-width:4.5px"></div></div>
<div class="t" style="left:975.0px;top:150.3px;font-size:13.5px;line-height:16px;letter-spacing:-0.50px;">Qh</div>
<div class="t" style="left:1079.0px;top:150.3px;font-size:13.5px;line-height:16px;letter-spacing:-0.54px;">Y-Axis</div>
<div class="btn" style="left:1125px;top:146px;width:100px;height:23px;"><div class="ad" style="right:8px;top:9.0px;border-left-width:4px;border-right-width:4px;border-top-width:4.5px"></div></div>
<div class="t" style="left:1131.0px;top:150.3px;font-size:13.5px;line-height:16px;letter-spacing:-0.32px;">None</div>
<div class="t" style="left:917.0px;top:175.3px;font-size:13.5px;line-height:16px;letter-spacing:-0.57px;">Scan</div>
<div class="fld" style="left:953px;top:175px;width:276px;height:23px;"></div>
<div class="t" style="left:956.0px;top:179.3px;font-size:13.5px;line-height:16px;letter-spacing:0.20px;">/entry/sample/temperature</div>
<div class="btn" style="left:966px;top:204px;width:80px;height:23px;"></div>
<div class="t" style="left:970.9px;top:208.3px;font-size:13.5px;line-height:16px;letter-spacing:-0.19px;">Select Scan</div>
<div class="btn" style="left:1100px;top:204px;width:80px;height:23px;"></div>
<div class="t" style="left:1106.2px;top:208.3px;font-size:13.5px;line-height:16px;letter-spacing:-0.19px;">Select Files</div>
<div class="t" style="left:927.6px;top:233.3px;font-size:13px;line-height:16px;font-weight:700;letter-spacing:0.14px;">Axis</div>
<div class="t" style="left:996.4px;top:233.3px;font-size:13px;line-height:16px;font-weight:700;letter-spacing:0.71px;">Minimum</div>
<div class="t" style="left:1104.9px;top:233.3px;font-size:13px;line-height:16px;font-weight:700;letter-spacing:0.72px;">Maximum</div>
<div class="t" style="left:1198.0px;top:233.3px;font-size:13px;line-height:16px;font-weight:700;letter-spacing:-0.08px;">Lock</div>
<div class="t" style="left:917.0px;top:262.8px;font-size:13.5px;line-height:16px;letter-spacing:-0.25px;">Ql</div>
<div class="fld" style="left:977px;top:259px;width:100px;height:22px;"><div class="spb"><div class="au" style="left:2.5px;top:4.5px;border-left-width:4px;border-right-width:4px"></div><div class="ad" style="left:2.5px;top:13.0px;border-left-width:4px;border-right-width:4px"></div></div></div>
<div class="t" style="left:1049.0px;top:262.8px;font-size:13.5px;line-height:16px;">0</div>
<div class="fld" style="left:1087px;top:259px;width:100px;height:22px;"><div class="spb"><div class="au" style="left:2.5px;top:4.5px;border-left-width:4px;border-right-width:4px"></div><div class="ad" style="left:2.5px;top:13.0px;border-left-width:4px;border-right-width:4px"></div></div></div>
<div class="t" style="left:1159.0px;top:262.8px;font-size:13.5px;line-height:16px;">0</div>
<div class="cb" style="left:1206px;top:262px;"></div>
<div class="t" style="left:917.0px;top:296.8px;font-size:13.5px;line-height:16px;letter-spacing:-0.13px;">Qk</div>
<div class="fld" style="left:977px;top:293px;width:100px;height:22px;"><div class="spb"><div class="au" style="left:2.5px;top:4.5px;border-left-width:4px;border-right-width:4px"></div><div class="ad" style="left:2.5px;top:13.0px;border-left-width:4px;border-right-width:4px"></div></div></div>
<div class="t" style="left:1038.2px;top:296.8px;font-size:13.5px;line-height:16px;letter-spacing:-0.26px;">1.4</div>
<div class="fld" style="left:1087px;top:293px;width:100px;height:22px;"><div class="spb"><div class="au" style="left:2.5px;top:4.5px;border-left-width:4px;border-right-width:4px"></div><div class="ad" style="left:2.5px;top:13.0px;border-left-width:4px;border-right-width:4px"></div></div></div>
<div class="t" style="left:1140.1px;top:296.8px;font-size:13.5px;line-height:16px;letter-spacing:0.06px;">1.58</div>
<div class="cb" style="left:1206px;top:296px;"></div>
<div class="t" style="left:917.0px;top:330.8px;font-size:13.5px;line-height:16px;letter-spacing:-0.50px;">Qh</div>
<div class="fld" style="left:977px;top:327px;width:100px;height:22px;"><div class="spb"><div class="au" style="left:2.5px;top:4.5px;border-left-width:4px;border-right-width:4px"></div><div class="ad" style="left:2.5px;top:13.0px;border-left-width:4px;border-right-width:4px"></div></div></div>
<div class="t" style="left:1030.4px;top:330.8px;font-size:13.5px;line-height:16px;letter-spacing:-0.07px;">13.5</div>
<div class="fld" style="left:1087px;top:327px;width:100px;height:22px;"><div class="spb"><div class="au" style="left:2.5px;top:4.5px;border-left-width:4px;border-right-width:4px"></div><div class="ad" style="left:2.5px;top:13.0px;border-left-width:4px;border-right-width:4px"></div></div></div>
<div class="t" style="left:1132.9px;top:330.8px;font-size:13.5px;line-height:16px;letter-spacing:-0.06px;">30.65</div>
<div class="cb" style="left:1206px;top:330px;"></div>
<div class="btn" style="left:977px;top:360px;width:100px;height:23px;"></div>
<div class="t" style="left:1015.3px;top:364.3px;font-size:13.5px;line-height:16px;letter-spacing:0.06px;">Plot</div>
<div class="btn" style="left:1087px;top:360px;width:100px;height:23px;"></div>
<div class="t" style="left:1122.1px;top:364.3px;font-size:13.5px;line-height:16px;letter-spacing:-0.32px;">Save</div>
<div class="cb" style="left:918px;top:392px;"></div>
<div class="t" style="left:937.5px;top:392.3px;font-size:13.5px;line-height:16px;letter-spacing:-0.19px;">Sum Projections</div>
<div class="cb" style="left:1046px;top:392px;"></div>
<div class="t" style="left:1065.5px;top:392.3px;font-size:13.5px;line-height:16px;letter-spacing:-0.23px;">Plot Lines</div>
<div class="cb" style="left:1136px;top:392px;"></div>
<div class="t" style="left:1155.5px;top:392.3px;font-size:13.5px;line-height:16px;letter-spacing:-0.02px;">Hide Limits</div>
<div class="btn" style="left:906px;top:429px;width:80px;height:24px;border-color:#2e76b0;box-shadow:inset 0 0 0 1px #c4dcef;background:linear-gradient(#fdfdfe,#eef1f4 45%,#dce4ea);"></div>
<div class="t" style="left:936.6px;top:433.8px;font-size:13.5px;line-height:16px;letter-spacing:-0.35px;">Reset</div>
<svg style="position:absolute;left:921px;top:433px" width="14" height="18" viewBox="0 0 14 18"><rect x="5.4" y="0.3" width="3" height="7.6" rx="0.8" fill="#9d6712"/><rect x="3.2" y="7.4" width="7.6" height="2.8" fill="#9c9c98"/><rect x="3" y="9.8" width="8" height="5.6" rx="0.6" fill="#efcf1a"/><rect x="3" y="9.8" width="8" height="1.4" fill="#d4b41a"/></svg>
<div class="btn" style="left:1160px;top:429px;width:80px;height:24px;"></div>
<div class="t" style="left:1192.3px;top:433.8px;font-size:13.5px;line-height:16px;letter-spacing:-0.30px;">Close</div>
<svg style="position:absolute;left:1176px;top:433.8px" width="14" height="14" viewBox="0 0 14 14"><path d="M2.2 1.6 C3.6 1.4 4.6 2.6 6.4 5.4 C8.6 8.4 10.4 10.6 13 11.6 C12.2 12.8 10.6 12.9 9.2 11.4 C7.6 9.6 5.8 6.6 4.6 4.6 C3.8 3.2 3 2.4 2.2 1.6 Z" fill="#1a1a1a" stroke="#1a1a1a" stroke-width=".7"/><path d="M10.2 0.8 C11.2 0.9 11.8 1.6 11.6 2.6 C10 5.4 7 9.2 3.6 11.6 C2.6 12.3 1.4 12.6 0.6 12.6 C3.4 10.6 7.2 5.8 10.2 0.8 Z" fill="#1a1a1a" stroke="#1a1a1a" stroke-width=".9"/></svg>
<svg style="position:absolute;left:1237px;top:450px" width="13" height="13" viewBox="0 0 13 13"><rect x="0" y="0" width="13" height="13" fill="#fbfaf9"/><path d="M12 3 L3 12 M12 6.5 L6.5 12 M12 10 L10 12" stroke="#a09a94" stroke-width="1"/></svg>
</div></div>
<div class="win" style="left:807px;top:471px;width:300px;height:463px;">
<div class="tb"></div>
<div class="tl" style="left:8px;top:4.5px"></div>
<div class="tl" style="left:28px;top:4.5px"></div>
<div class="tl" style="left:48px;top:4.5px"></div>
<svg style="position:absolute;left:105.5px;top:4px" width="15" height="15" viewBox="0 0 15 15"><rect x="0.5" y="0.5" width="13.5" height="13.5" fill="#fbfbfb" stroke="#d6d6d6" stroke-width="1"/><path d="M11.3 3.2 L2.4 14" stroke="#c4c4c4" stroke-width="1.1" fill="none"/><path d="M3.4 3.2 L12.2 14" stroke="#848484" stroke-width="1.9" fill="none"/></svg>
</div>
<div id="selfiles" style="position:absolute;left:807px;top:471px;width:300px;height:463px;overflow:hidden;"><div style="position:absolute;left:-807px;top:-471px;">
<div class="t" style="left:933.5px;top:475.3px;font-size:13px;line-height:16px;color:#6b6b6b;letter-spacing:0.11px;">Select Files</div>
<div class="t" style="left:856.0px;top:508.3px;font-size:13.5px;line-height:16px;letter-spacing:-0.17px;">Prefix</div>
<div class="fld" style="left:933px;top:504px;width:125px;height:23px;"></div>
<div style="position:absolute;left:818px;top:533px;width:278px;height:360px;border:1px solid #c4bfb9;box-sizing:border-box;background:#efebe7;"></div>
<div style="position:absolute;left:819px;top:534px;width:262px;height:358px;overflow:hidden;"><div style="position:absolute;left:-819px;top:-534px;">
<div class="t" style="left:871.5px;top:543.3px;font-size:13px;line-height:16px;font-weight:700;letter-spacing:0.53px;">File</div>
<div class="t" style="left:954.9px;top:543.3px;font-size:13px;line-height:16px;font-weight:700;letter-spacing:0.75px;">Temperature</div>
<div class="t" style="left:835.0px;top:564.1px;font-size:13.5px;line-height:16px;letter-spacing:-0.15px;">na04v2o5_30K</div>
<div class="fld" style="left:935px;top:560.0px;width:125px;height:23px;"></div>
<div class="t" style="left:1040.5px;top:564.1px;font-size:13.5px;line-height:16px;">30</div>
<div class="cb" style="left:1062px;top:564.3px;"></div>
<svg style="position:absolute;left:1062px;top:564.3px" width="14" height="14" viewBox="0 0 14 14"><path d="M3.2 6.2 L6 10.8 L10.9 2.6" fill="none" stroke="#111" stroke-width="1.9"/></svg>
<div class="t" style="left:835.0px;top:589.1px;font-size:13.5px;line-height:16px;letter-spacing:-0.15px;">na04v2o5_40K</div>
<div class="fld" style="left:935px;top:585.0px;width:125px;height:23px;"></div>
<div class="t" style="left:1040.5px;top:589.1px;font-size:13.5px;line-height:16px;">40</div>
<div class="cb" style="left:1062px;top:589.3px;"></div>
<svg style="position:absolute;left:1062px;top:589.3px" width="14" height="14" viewBox="0 0 14 14"><path d="M3.2 6.2 L6 10.8 L10.9 2.6" fill="none" stroke="#111" stroke-width="1.9"/></svg>
<div class="t" style="left:835.0px;top:614.1px;font-size:13.5px;line-height:16px;letter-spacing:-0.15px;">na04v2o5_50K</div>
<div class="fld" style="left:935px;top:610.0px;width:125px;height:23px;"></div>
<div class="t" style="left:1040.5px;top:614.1px;font-size:13.5px;line-height:16px;">50</div>
<div class="cb" style="left:1062px;top:614.3px;"></div>
<svg style="position:absolute;left:1062px;top:614.3px" width="14" height="14" viewBox="0 0 14 14"><path d="M3.2 6.2 L6 10.8 L10.9 2.6" fill="none" stroke="#111" stroke-width="1.9"/></svg>
<div class="t" style="left:835.0px;top:639.1px;font-size:13.5px;line-height:16px;letter-spacing:-0.15px;">na04v2o5_60K</div>
<div class="fld" style="left:935px;top:635.0px;width:125px;height:23px;"></div>
<div class="t" style="left:1040.5px;top:639.1px;font-size:13.5px;line-height:16px;">60</div>
<div class="cb" style="left:1062px;top:639.3px;"></div>
<svg style="position:absolute;left:1062px;top:639.3px" width="14" height="14" viewBox="0 0 14 14"><path d="M3.2 6.2 L6 10.8 L10.9 2.6" fill="none" stroke="#111" stroke-width="1.9"/></svg>
<div class="t" style="left:835.0px;top:664.1px;font-size:13.5px;line-height:16px;letter-spacing:-0.15px;">na04v2o5_80K</div>
<div class="fld" style="left:935px;top:660.0px;width:125px;height:23px;"></div>
<div class="t" style="left:1040.5px;top:664.1px;font-size:13.5px;line-height:16px;">80</div>
<div class="cb" style="left:1062px;top:664.3px;"></div>
<div class="t" style="left:835.0px;top:689.1px;font-size:13.5px;line-height:16px;letter-spacing:-0.03px;">na04v2o5_110K</div>
<div class="fld" style="left:935px;top:685.0px;width:125px;height:23px;"></div>
<div class="t" style="left:1034.0px;top:689.1px;font-size:13.5px;line-height:16px;">110</div>
<div class="cb" style="left:1062px;top:689.3px;"></div>
<svg style="position:absolute;left:1062px;top:689.3px" width="14" height="14" viewBox="0 0 14 14"><path d="M3.2 6.2 L6 10.8 L10.9 2.6" fill="none" stroke="#111" stroke-width="1.9"/></svg>
<div class="t" style="left:835.0px;top:714.1px;font-size:13.5px;line-height:16px;letter-spacing:-0.10px;">na04v2o5_120K</div>
<div class="fld" style="left:935px;top:710.0px;width:125px;height:23px;"></div>
<div class="t" style="left:1033.0px;top:714.1px;font-size:13.5px;line-height:16px;">120</div>
<div class="cb" style="left:1062px;top:714.3px;"></div>
<svg style="position:absolute;left:1062px;top:714.3px" width="14" height="14" viewBox="0 0 14 14"><path d="M3.2 6.2 L6 10.8 L10.9 2.6" fill="none" stroke="#111" stroke-width="1.9"/></svg>
<div class="t" style="left:835.0px;top:739.1px;font-size:13.5px;line-height:16px;letter-spacing:-0.10px;">na04v2o5_130K</div>
<div class="fld" style="left:935px;top:735.0px;width:125px;height:23px;"></div>
<div class="t" style="left:1033.0px;top:739.1px;font-size:13.5px;line-height:16px;">130</div>
<div class="cb" style="left:1062px;top:739.3px;"></div>
<svg style="position:absolute;left:1062px;top:739.3px" width="14" height="14" viewBox="0 0 14 14"><path d="M3.2 6.2 L6 10.8 L10.9 2.6" fill="none" stroke="#111" stroke-width="1.9"/></svg>
<div class="t" style="left:835.0px;top:764.1px;font-size:13.5px;line-height:16px;letter-spacing:-0.10px;">na04v2o5_140K</div>
<div class="fld" style="left:935px;top:760.0px;width:125px;height:23px;"></div>
<div class="t" style="left:1033.0px;top:764.1px;font-size:13.5px;line-height:16px;">140</div>
<div class="cb" style="left:1062px;top:764.3px;"></div>
<svg style="position:absolute;left:1062px;top:764.3px" width="14" height="14" viewBox="0 0 14 14"><path d="M3.2 6.2 L6 10.8 L10.9 2.6" fill="none" stroke="#111" stroke-width="1.9"/></svg>
<div class="t" style="left:835.0px;top:789.1px;font-size:13.5px;line-height:16px;letter-spacing:-0.10px;">na04v2o5_150K</div>
<div class="fld" style="left:935px;top:785.0px;width:125px;height:23px;"></div>
<div class="t" style="left:1033.0px;top:789.1px;font-size:13.5px;line-height:16px;">150</div>
<div class="cb" style="left:1062px;top:789.3px;"></div>
<svg style="position:absolute;left:1062px;top:789.3px" width="14" height="14" viewBox="0 0 14 14"><path d="M3.2 6.2 L6 10.8 L10.9 2.6" fill="none" stroke="#111" stroke-width="1.9"/></svg>
<div class="t" style="left:835.0px;top:814.1px;font-size:13.5px;line-height:16px;letter-spacing:-0.10px;">na04v2o5_160K</div>
<div class="fld" style="left:935px;top:810.0px;width:125px;height:23px;"></div>
<div class="t" style="left:1033.0px;top:814.1px;font-size:13.5px;line-height:16px;">160</div>
<div class="cb" style="left:1062px;top:814.3px;"></div>
<svg style="position:absolute;left:1062px;top:814.3px" width="14" height="14" viewBox="0 0 14 14"><path d="M3.2 6.2 L6 10.8 L10.9 2.6" fill="none" stroke="#111" stroke-width="1.9"/></svg>
<div class="t" style="left:835.0px;top:839.1px;font-size:13.5px;line-height:16px;letter-spacing:-0.10px;">na04v2o5_170K</div>
<div class="fld" style="left:935px;top:835.0px;width:125px;height:23px;"></div>
<div class="t" style="left:1033.0px;top:839.1px;font-size:13.5px;line-height:16px;">170</div>
<div class="cb" style="left:1062px;top:839.3px;"></div>
<svg style="position:absolute;left:1062px;top:839.3px" width="14" height="14" viewBox="0 0 14 14"><path d="M3.2 6.2 L6 10.8 L10.9 2.6" fill="none" stroke="#111" stroke-width="1.9"/></svg>
<div class="t" style="left:835.0px;top:864.1px;font-size:13.5px;line-height:16px;letter-spacing:-0.10px;">na04v2o5_180K</div>
<div class="fld" style="left:935px;top:860.0px;width:125px;height:23px;"></div>
<div class="t" style="left:1033.0px;top:864.1px;font-size:13.5px;line-height:16px;">180</div>
<div class="cb" style="left:1062px;top:864.3px;"></div>
<svg style="position:absolute;left:1062px;top:864.3px" width="14" height="14" viewBox="0 0 14 14"><path d="M3.2 6.2 L6 10.8 L10.9 2.6" fill="none" stroke="#111" stroke-width="1.9"/></svg>
<div class="t" style="left:835.0px;top:889.1px;font-size:13.5px;line-height:16px;letter-spacing:-0.10px;">na04v2o5_190K</div>
<div class="fld" style="left:935px;top:885.0px;width:125px;height:23px;"></div>
<div class="t" style="left:1033.0px;top:889.1px;font-size:13.5px;line-height:16px;">190</div>
<div class="cb" style="left:1062px;top:889.3px;"></div>
<svg style="position:absolute;left:1062px;top:889.3px" width="14" height="14" viewBox="0 0 14 14"><path d="M3.2 6.2 L6 10.8 L10.9 2.6" fill="none" stroke="#111" stroke-width="1.9"/></svg>
</div></div>
<div style="position:absolute;left:1081px;top:534px;width:14px;height:358px;background:#d9d6d2;border-left:1px solid #c4bfb9;box-sizing:border-box;"></div>
<div style="position:absolute;left:1082px;top:547px;width:13px;height:212px;background:linear-gradient(90deg,#f3f1ee,#fbfaf9);border-top:1px solid #c4bfb9;border-bottom:1px solid #b9b4ae;box-sizing:border-box;"></div>
<div style="position:absolute;left:1082px;top:534px;width:13px;height:13px;background:linear-gradient(#fbfaf9,#efece8);"></div>
<div style="position:absolute;left:1082px;top:878px;width:13px;height:14px;background:linear-gradient(#fbfaf9,#efece8);border-top:1px solid #c4bfb9;box-sizing:border-box;"></div>
<div class="au" style="left:1084px;top:539px;border-left-width:4.5px;border-right-width:4.5px;border-bottom-width:4.5px"></div>
<div class="ad" style="left:1084px;top:883px;border-left-width:4.5px;border-right-width:4.5px;border-top-width:4.5px"></div>
<div class="btn" style="left:1016px;top:899px;width:80px;height:24px;border-color:#2e76b0;box-shadow:inset 0 0 0 1px #c4dcef;background:linear-gradient(#fdfdfe,#eef1f4 45%,#dce4ea);"></div>
<div class="t" style="left:1048.3px;top:903.8px;font-size:13.5px;line-height:16px;letter-spacing:-0.30px;">Close</div>
<svg style="position:absolute;left:1032px;top:903.8px" width="14" height="14" viewBox="0 0 14 14"><path d="M2.2 1.6 C3.6 1.4 4.6 2.6 6.4 5.4 C8.6 8.4 10.4 10.6 13 11.6 C12.2 12.8 10.6 12.9 9.2 11.4 C7.6 9.6 5.8 6.6 4.6 4.6 C3.8 3.2 3 2.4 2.2 1.6 Z" fill="#1a1a1a" stroke="#1a1a1a" stroke-width=".7"/><path d="M10.2 0.8 C11.2 0.9 11.8 1.6 11.6 2.6 C10 5.4 7 9.2 3.6 11.6 C2.6 12.3 1.4 12.6 0.6 12.6 C3.4 10.6 7.2 5.8 10.2 0.8 Z" fill="#1a1a1a" stroke="#1a1a1a" stroke-width=".9"/></svg>
<svg style="position:absolute;left:1093px;top:920px" width="13" height="13" viewBox="0 0 13 13"><rect x="0" y="0" width="13" height="13" fill="#fbfaf9"/><path d="M12 3 L3 12 M12 6.5 L6.5 12 M12 10 L10 12" stroke="#a09a94" stroke-width="1"/></svg>
</div></div></body></html>
